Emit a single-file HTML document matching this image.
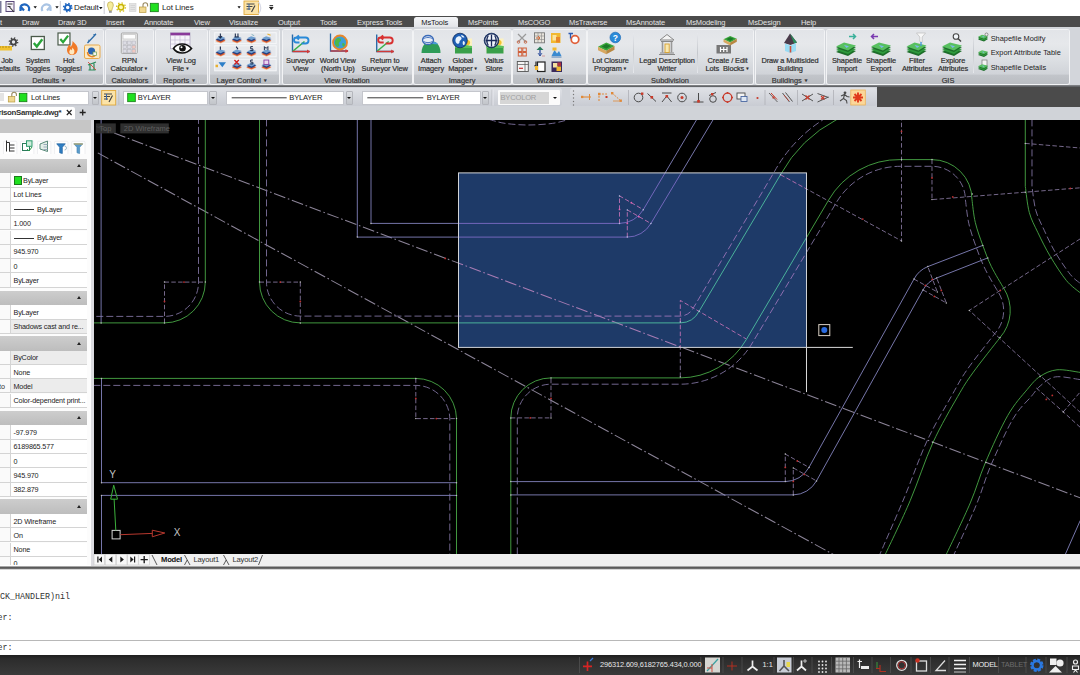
<!DOCTYPE html>
<html><head><meta charset="utf-8"><title>CAD</title>
<style>
*{box-sizing:border-box;margin:0;padding:0}
html,body{width:1080px;height:675px;overflow:hidden;background:#fff}
body{position:relative;font-family:"Liberation Sans",sans-serif;font-size:8px;color:#222}
.a{position:absolute}
.t{position:absolute;white-space:nowrap;line-height:1}
#qat{left:0;top:0;width:1080px;height:16px;background:#fff}
#tabs{left:0;top:15.5px;width:1080px;height:12px;background:#4b4b4b}
#tabs .t{color:#e4e4e4;font-size:7.5px;top:3.7px;letter-spacing:-0.1px}
#rib{left:0;top:27px;width:1080px;height:59px;background:#d3d6db}
.pan{position:absolute;top:2.5px;height:54.5px;background:linear-gradient(#e2e4e8 0%,#e6e8eb 25%,#dcdfe3 55%,#d0d3d8 82%,#c2c5ca 83%,#babdc2 100%);border-radius:2px;box-shadow:0 0 0 1px #f2f3f5}
.pt{position:absolute;white-space:nowrap;line-height:1;font-size:7.4px;color:#2c2c2c;top:49.8px;text-align:center;-webkit-text-stroke:0.2px #444}
.lb{position:absolute;white-space:nowrap;line-height:8.6px;font-size:7.4px;color:#262626;text-align:center;top:29.6px;letter-spacing:-0.1px;-webkit-text-stroke:0.2px #3a3a3a}
#tb2{left:0;top:87px;width:1080px;height:19.5px;background:#d0d3d9}
#tb3{left:0;top:106.5px;width:1080px;height:13px;background:#d0d3d8}
</style></head><body>
<div class="a" id="qat"></div><svg class="a" style="left:0;top:0" width="300" height="16" viewBox="0 0 300 16"><rect x="0" y="1" width="1.5" height="12" fill="#7a7a9a"/><rect x="6" y="1.5" width="8" height="10" fill="#f4f0f8" stroke="#5a4a7a" stroke-width="1"/><path d="M7.5,4 h5 M7.5,6.5 h3 M9.5,7 l4.5,5" stroke="#333" stroke-width="1.1" fill="none"/><path d="M20.5,6.5 L24,10.5 M20.5,6.5 L20.5,11 M20.5,6.5 a4.6,4.2 0 1 1 8,4.5" fill="none" stroke="#1f66c0" stroke-width="2.2"/><path d="M33.5,6.2 h3.4 l-1.7,2.2z M55.3,6.2 h3.4 l-1.7,2.2z M99,7 h3.6 l-1.8,2.3z M237.5,6.2 h3.2 l-1.6,2.2z" fill="#111"/><path d="M50.5,6.5 L47,10.5 M50.5,6.5 L50.5,11 M50.5,6.5 a4.6,4.2 0 1 0 -8,4.5" fill="none" stroke="#a9c4e4" stroke-width="2.2"/><path d="M60.3,1 V14 M104.2,1 V14" stroke="#c8c8d0" stroke-width="1"/><circle cx="67.700" cy="7.600" r="2.700" fill="none" stroke="#1f66c0" stroke-width="1.900"/><circle cx="67.700" cy="7.600" r="4.100" fill="none" stroke="#1f66c0" stroke-width="1.500" stroke-dasharray="1.500 1.720"/><path d="M107.5,5 a2.9,3.2 0 0 1 5.8,0 c0,2.2 -1.3,3 -1.4,5.5 h-3 c-0.1,-2.5 -1.4,-3.3 -1.4,-5.500z" fill="#f6ec9a" stroke="#b9a84a" stroke-width="0.7"/><rect x="109" y="11" width="2.8" height="1.8" fill="#999"/><circle cx="121" cy="7.3" r="2.7" fill="#fff7b0" stroke="#c8b400" stroke-width="1.5"/><circle cx="121" cy="7.3" r="4.4" fill="none" stroke="#d6c320" stroke-width="1.4" stroke-dasharray="1.4 2.05"/><rect x="129.5" y="3.5" width="6.5" height="8" fill="#e4e4e4" stroke="#d0d0d0" stroke-width="0.6"/><path d="M130.5,5.500 h4.500 M130.5,7.500 h4.500 M130.5,9.500 h4.500" stroke="#cfcfcf" stroke-width="0.8"/><rect x="139.5" y="7" width="6.5" height="5.5" fill="#f0d890" stroke="#b89a40" stroke-width="0.7"/><path d="M143,7 V5 a2.300,2.300 0 0 1 4.600,0 V6.500" fill="none" stroke="#9a8a60" stroke-width="1.1"/><rect x="150.3" y="3.3" width="8" height="8.4" fill="#1fe01f" stroke="#157a15" stroke-width="0.8"/><rect x="244" y="1" width="14.5" height="13.5" fill="#fbe3a8" stroke="#e0a83a" stroke-width="0.9"/><path d="M246.5,4 h8 M246.5,6.500 h6 M246.5,9 h4 M255,5.500 l-3.500,6.500" stroke="#444" stroke-width="1.2" fill="none"/><path d="M249,4 v6" stroke="#3a6ab0" stroke-width="1"/><path d="M258.5,2 a9,9 0 0 1 0,12" fill="none" stroke="#d8dae6" stroke-width="1.2"/><path d="M269.5,5.500 h3.600 M269.500,7.300 h3.600 l-1.800,2.300z" stroke="#111" stroke-width="0.8" fill="#111"/></svg><span class="t" style="left:74px;top:3.6px;font-size:8px;color:#222;letter-spacing:-0.1px">Default</span><span class="t" style="left:162px;top:3.6px;font-size:8px;color:#222;letter-spacing:-0.1px">Lot Lines</span><div class="a" id="tabs"><span class="t" style="left:0px">t</span><span class="t" style="left:22px">Draw</span><span class="t" style="left:58px">Draw 3D</span><span class="t" style="left:106px">Insert</span><span class="t" style="left:144px">Annotate</span><span class="t" style="left:194px">View</span><span class="t" style="left:229px">Visualize</span><span class="t" style="left:278px">Output</span><span class="t" style="left:320px">Tools</span><span class="t" style="left:357px">Express Tools</span><span class="t" style="left:468px">MsPoints</span><span class="t" style="left:518px">MsCOGO</span><span class="t" style="left:569px">MsTraverse</span><span class="t" style="left:626px">MsAnnotate</span><span class="t" style="left:686px">MsModeling</span><span class="t" style="left:748px">MsDesign</span><span class="t" style="left:801px">Help</span><div class="a" style="left:414px;top:1px;width:43.5px;height:10.5px;background:linear-gradient(#f4f5f7,#e3e5e9);border-radius:2.5px 2.5px 0 0"></div><span class="t" style="left:421.3px;color:#1a1a1a">MsTools</span></div><div class="a" id="rib"><div class="pan" style="left:-3px;width:106px"></div><span class="pt" style="left:9px;width:80px">Defaults<span style="font-size:4.6px;position:relative;top:-1px;margin-left:2px">&#9660;</span></span><div class="pan" style="left:105.6px;width:47.400000000000006px"></div><span class="pt" style="left:90px;width:80px">Calculators</span><div class="pan" style="left:156px;width:51px"></div><span class="pt" style="left:139.5px;width:80px">Reports<span style="font-size:4.6px;position:relative;top:-1px;margin-left:2px">&#9660;</span></span><div class="pan" style="left:210px;width:69.30000000000001px"></div><span class="pt" style="left:202px;width:80px">Layer Control<span style="font-size:4.6px;position:relative;top:-1px;margin-left:2px">&#9660;</span></span><div class="pan" style="left:282.6px;width:129.0px"></div><span class="pt" style="left:307px;width:80px">View Rotation</span><div class="pan" style="left:414.3px;width:96.39999999999998px"></div><span class="pt" style="left:422px;width:80px">Imagery</span><div class="pan" style="left:513.4px;width:72.30000000000007px"></div><span class="pt" style="left:510px;width:80px">Wizards</span><div class="pan" style="left:588.3px;width:165.0px"></div><span class="pt" style="left:630px;width:80px">Subdivision</span><div class="pan" style="left:756px;width:68px"></div><span class="pt" style="left:750px;width:80px">Buildings<span style="font-size:4.6px;position:relative;top:-1px;margin-left:2px">&#9660;</span></span><div class="pan" style="left:826.8px;width:242.5px"></div><span class="pt" style="left:908px;width:80px">GIS</span><span class="lb" style="left:-33px;width:80px">Job<br>Defaults</span><span class="lb" style="left:-2.200000000000003px;width:80px">System<br>Toggles</span><span class="lb" style="left:28.5px;width:80px">Hot<br>Toggles!</span><span class="lb" style="left:89.30000000000001px;width:80px">RPN<br>Calculator<span style="font-size:4.4px;position:relative;top:-1px;margin-left:1px">&#9660;</span></span><span class="lb" style="left:141px;width:80px">View Log<br>File<span style="font-size:4.4px;position:relative;top:-1px;margin-left:1px">&#9660;</span></span><span class="lb" style="left:260.5px;width:80px">Surveyor<br>View</span><span class="lb" style="left:297.8px;width:80px">World View<br>(North Up)</span><span class="lb" style="left:344.7px;width:80px">Return to<br>Surveyor View</span><span class="lb" style="left:391px;width:80px">Attach<br>Imagery</span><span class="lb" style="left:423px;width:80px">Global<br>Mapper<span style="font-size:4.4px;position:relative;top:-1px;margin-left:1px">&#9660;</span></span><span class="lb" style="left:454px;width:80px">Valtus<br>Store</span><span class="lb" style="left:570.5px;width:80px">Lot Closure<br>Program<span style="font-size:4.4px;position:relative;top:-1px;margin-left:1px">&#9660;</span></span><span class="lb" style="left:627px;width:80px">Legal Description<br>Writer</span><span class="lb" style="left:687.5px;width:80px">Create / Edit<br>Lots &nbsp;Blocks<span style="font-size:4.4px;position:relative;top:-1px;margin-left:1px">&#9660;</span></span><span class="lb" style="left:750px;width:80px">Draw a Multisided<br>Building</span><span class="lb" style="left:807px;width:80px">Shapefile<br>Import</span><span class="lb" style="left:841px;width:80px">Shapefile<br>Export</span><span class="lb" style="left:877px;width:80px">Filter<br>Attributes</span><span class="lb" style="left:913px;width:80px">Explore<br>Attributes</span><span class="t" style="left:990.7px;top:7.6px;font-size:7.4px;color:#222">Shapefile Modify</span><span class="t" style="left:990.7px;top:22.2px;font-size:7.4px;color:#222">Export Attribute Table</span><span class="t" style="left:990.7px;top:36.6px;font-size:7.4px;color:#222">Shapefile Details</span><div class="a" style="left:696.5px;top:6px;width:1px;height:40px;background:linear-gradient(#e6e8ec,#c4c7cc,#e6e8ec)"></div><div class="a" style="left:632.5px;top:6px;width:1px;height:40px;background:linear-gradient(#e6e8ec,#c9ccd1,#e6e8ec)"></div><div class="a" style="left:972.5px;top:6px;width:1px;height:40px;background:linear-gradient(#e6e8ec,#c4c7cc,#e6e8ec)"></div><svg class="a" style="left:0;top:0" width="1080" height="59" viewBox="0 27 1080 59"><rect x="-2" y="46" width="14" height="4.5" fill="#f2c230"/><path d="M0,46 v2 M3,46 v2 M6,46 v2 M9,46 v2" stroke="#9a7a10" stroke-width="0.7"/><circle cx="13.500" cy="42" r="2.600" fill="none" stroke="#444" stroke-width="1.8"/><circle cx="13.500" cy="42" r="4.100" fill="none" stroke="#444" stroke-width="1.500" stroke-dasharray="1.3 1.92"/><g transform="translate(31.3,36.5) scale(1)"><rect x="0" y="0" width="13" height="13" fill="#fff" stroke="#4a5a4a" stroke-width="1.3"/><path d="M2.5,6.5 L5.5,10 L11,2.8" fill="none" stroke="#2aa63a" stroke-width="2.4"/></g><g transform="translate(58,33) scale(0.92)"><rect x="0" y="0" width="13" height="13" fill="#fff" stroke="#4a5a4a" stroke-width="1.3"/><path d="M2.5,6.5 L5.5,10 L11,2.8" fill="none" stroke="#2aa63a" stroke-width="2.4"/></g><path d="M72.500,41 c2.500,2.500 6,5 5,9.500 c-0.600,3 -3,4.500 -5.500,4.500 c-2.800,0 -5,-2 -5,-5 c0,-2.500 1.500,-3.500 2,-5.500 c1,1 1.500,1.500 1.700,2.500 c1.200,-1.500 2,-3.500 1.800,-6z" fill="#f07a28"/><path d="M72.300,47.500 c1.500,1.500 2.500,3 2,5 c-0.400,1.500 -1.500,2 -2.500,2 c-1.500,0 -2.500,-1 -2.500,-2.500 c0,-1.500 1,-2 1.300,-3 c0.700,0.500 0.900,1 1,1.500 c0.500,-1 0.800,-2 0.700,-3z" fill="#fde8c0"/><path d="M87.500,43 L96,34" stroke="#2a6aa8" stroke-width="1.2"/><path d="M88,42.500 l1,-3 M96,34 l-3,1" stroke="#2a6aa8" stroke-width="0.8"/><rect x="84.500" y="45" width="15.500" height="13.500" rx="1.500" fill="#fbe9c4" stroke="#e9a94a" stroke-width="1"/><circle cx="91.500" cy="51" r="3.600" fill="#2a64b4"/><path d="M87.500,52 a4.500,4.500 0 0 0 8,3" stroke="#e8862a" stroke-width="1.4" fill="none"/><rect x="93" y="52" width="3.500" height="3.500" fill="#f4f4f4" stroke="#6a9a4a" stroke-width="0.7"/><path d="M88,65 L96,62 M88.500,70 h7 M90,63.500 v6 M94,63.500 v6" stroke="#2a8a5a" stroke-width="1.200" fill="none"/><path d="M88,62 l8,8" stroke="#d04a3a" stroke-width="0.9"/><rect x="121.300" y="33" width="16" height="20.500" rx="1" fill="#ececec" stroke="#a8a8a8" stroke-width="1"/><rect x="123" y="34.500" width="12.600" height="4.500" fill="#fdfdfd" stroke="#bbb" stroke-width="0.600"/><g stroke="#b4b4bc" stroke-width="0.600"><rect x="123" y="41" width="3.600" height="3.300" fill="#dcdce4"/><rect x="127.500" y="41" width="3.600" height="3.300" fill="#dcdce4"/><rect x="132" y="41" width="3.600" height="3.300" fill="#dcdce4"/><rect x="123" y="45.300" width="3.600" height="3.300" fill="#dcdce4"/><rect x="127.500" y="45.300" width="3.600" height="3.300" fill="#dcdce4"/><rect x="132" y="45.300" width="3.600" height="3.300" fill="#f0c8c0"/><rect x="123" y="49.500" width="3.600" height="3.300" fill="#dcdce4"/><rect x="127.500" y="49.500" width="3.600" height="3.300" fill="#dcdce4"/><rect x="132" y="49.500" width="3.600" height="3.300" fill="#f0c8c0"/></g><rect x="170.500" y="32.800" width="19.500" height="16" fill="#f6f4fa" stroke="#b0a8c0" stroke-width="0.800"/><rect x="170.500" y="32.800" width="19.500" height="2.600" fill="#8a3a9a"/><path d="M175,36 v12 M180,36 v12 M185,36 v12 M171,40 h19 M171,44 h19" stroke="#c4bcd4" stroke-width="0.700"/><path d="M173.500,48.500 c4,-6 13,-6 18,0 c-5,6 -14,6 -18,0z" fill="#fff" stroke="#111" stroke-width="1.700"/><circle cx="182.500" cy="48.300" r="3.300" fill="#111"/><circle cx="181.500" cy="47.200" r="1" fill="#fff"/><rect x="214.700" y="32.7" width="61.500" height="10.9" fill="#e6e8ec" stroke="#f6f7f9" stroke-width="1"/><g transform="translate(215.5,34.400000000000006) scale(0.88)"><path d="M0,8 L5.500,5.800 L11.500,7.800 L6,10.400 Z" fill="#f4c49c"/><path d="M0,7.200 L5.500,5 L11.500,7 L6,9.600 Z" fill="#d8552a"/><path d="M0,5.800 L5.500,3.400 L11.500,5.200 L6,8.200 Z" fill="#27407f"/><path d="M0.800,4.500 L5.500,2.200 L11,3.800 L6,6.400 Z" fill="#6f9fd0"/><path d="M5.5,-1 V3.5 M3.5,2 L5.5,4 L7.5,2" stroke="#1a2a4a" stroke-width="1.2" fill="none"/></g><g transform="translate(231.8,34.400000000000006) scale(0.88)"><path d="M0,8 L5.500,5.800 L11.500,7.800 L6,10.400 Z" fill="#f4c49c"/><path d="M0,7.200 L5.500,5 L11.500,7 L6,9.600 Z" fill="#d8552a"/><path d="M0,5.800 L5.500,3.400 L11.500,5.200 L6,8.200 Z" fill="#27407f"/><path d="M0.800,4.500 L5.500,2.200 L11,3.800 L6,6.400 Z" fill="#6f9fd0"/><path d="M4,-1 V3 M7,-1 V3 M3,3 H8" stroke="#1a2a4a" stroke-width="1.2" fill="none"/></g><g transform="translate(246.3,34.400000000000006) scale(0.88)"><path d="M0,8 L5.500,5.800 L11.500,7.800 L6,10.400 Z" fill="#f4c49c"/><path d="M0,7.200 L5.500,5 L11.500,7 L6,9.600 Z" fill="#d8552a"/><path d="M0,5.800 L5.500,3.400 L11.500,5.200 L6,8.200 Z" fill="#27407f"/><path d="M0.800,4.500 L5.500,2.200 L11,3.800 L6,6.400 Z" fill="#6f9fd0"/><path d="M6,0 L9,1.5" stroke="#7ab" stroke-width="1"/></g><g transform="translate(261.3,34.400000000000006) scale(0.88)"><path d="M0,8 L5.500,5.800 L11.500,7.800 L6,10.400 Z" fill="#f4c49c"/><path d="M0,7.200 L5.500,5 L11.500,7 L6,9.600 Z" fill="#d8552a"/><path d="M0,5.800 L5.500,3.400 L11.500,5.200 L6,8.200 Z" fill="#27407f"/><path d="M0.800,4.500 L5.500,2.200 L11,3.800 L6,6.400 Z" fill="#6f9fd0"/><path d="M7,-0.5 L10.5,1" stroke="#e8b030" stroke-width="1.4"/></g><rect x="214.700" y="45.8" width="61.500" height="11.0" fill="#e6e8ec" stroke="#f6f7f9" stroke-width="1"/><g transform="translate(215.5,47.5) scale(0.88)"><path d="M0,8 L5.500,5.800 L11.500,7.800 L6,10.400 Z" fill="#f4c49c"/><path d="M0,7.200 L5.500,5 L11.500,7 L6,9.600 Z" fill="#d8552a"/><path d="M0,5.800 L5.500,3.400 L11.500,5.200 L6,8.200 Z" fill="#27407f"/><path d="M0.800,4.500 L5.500,2.200 L11,3.800 L6,6.400 Z" fill="#6f9fd0"/><path d="M5.5,-1 V2.5" stroke="#1a2a4a" stroke-width="1.3"/></g><g transform="translate(231.8,47.5) scale(0.88)"><path d="M0,8 L5.500,5.800 L11.500,7.800 L6,10.400 Z" fill="#f4c49c"/><path d="M0,7.200 L5.500,5 L11.500,7 L6,9.600 Z" fill="#d8552a"/><path d="M0,5.800 L5.500,3.400 L11.500,5.200 L6,8.200 Z" fill="#27407f"/><path d="M0.800,4.500 L5.500,2.200 L11,3.800 L6,6.400 Z" fill="#6f9fd0"/><path d="M5,-1 L7,2" stroke="#1a2a4a" stroke-width="1.3"/></g><g transform="translate(246.3,47.5) scale(0.88)"><path d="M0,8 L5.500,5.800 L11.500,7.800 L6,10.400 Z" fill="#f4c49c"/><path d="M0,7.200 L5.500,5 L11.500,7 L6,9.600 Z" fill="#d8552a"/><path d="M0,5.800 L5.500,3.400 L11.500,5.200 L6,8.200 Z" fill="#27407f"/><path d="M0.800,4.500 L5.500,2.200 L11,3.800 L6,6.400 Z" fill="#6f9fd0"/><path d="M7.5,-1 H5 V1.5 H7.5 V3.5 H4.5" stroke="#1a2a4a" stroke-width="1.1" fill="none"/></g><g transform="translate(261.3,47.5) scale(0.88)"><path d="M0,8 L5.500,5.800 L11.500,7.800 L6,10.400 Z" fill="#f4c49c"/><path d="M0,7.200 L5.500,5 L11.500,7 L6,9.600 Z" fill="#d8552a"/><path d="M0,5.800 L5.500,3.400 L11.500,5.200 L6,8.200 Z" fill="#27407f"/><path d="M0.800,4.500 L5.500,2.200 L11,3.800 L6,6.400 Z" fill="#6f9fd0"/><path d="M3.5,-1 V3 M7.5,-1 V3 M3.5,-1 L5.5,1 L7.5,-1" stroke="#1a2a4a" stroke-width="1.1" fill="none"/></g><rect x="214.700" y="59.2" width="61.500" height="11.6" fill="#e6e8ec" stroke="#f6f7f9" stroke-width="1"/><path d="M215.5,64.7 h2.500 v2.500 h-2.500z" fill="#e8b030"/><path d="M218.5,62.2 h7.500 l-3.700,5z" fill="#2d7fc8"/><g transform="translate(231.8,60.900000000000006) scale(0.88)"><path d="M0,8 L5.500,5.800 L11.500,7.800 L6,10.400 Z" fill="#f4c49c"/><path d="M0,7.200 L5.500,5 L11.500,7 L6,9.600 Z" fill="#d8552a"/><path d="M0,5.800 L5.500,3.400 L11.500,5.200 L6,8.200 Z" fill="#27407f"/><path d="M0.800,4.500 L5.500,2.200 L11,3.800 L6,6.400 Z" fill="#6f9fd0"/><path d="M3,-1 L8,4 M8,-1 L3,4" stroke="#d02020" stroke-width="1.5"/></g><g transform="translate(246.3,60.900000000000006) scale(0.88)"><path d="M0,8 L5.500,5.800 L11.500,7.800 L6,10.400 Z" fill="#f4c49c"/><path d="M0,7.200 L5.500,5 L11.500,7 L6,9.600 Z" fill="#d8552a"/><path d="M0,5.800 L5.500,3.400 L11.500,5.200 L6,8.200 Z" fill="#27407f"/><path d="M0.800,4.500 L5.500,2.200 L11,3.800 L6,6.400 Z" fill="#6f9fd0"/><path d="M7.5,-1 H5 V1.5 H7.5 V3.5 H4.5" stroke="#1a2a4a" stroke-width="1.1" fill="none"/></g><g transform="translate(261.3,60.900000000000006) scale(0.88)"><path d="M0,8 L5.500,5.800 L11.500,7.800 L6,10.400 Z" fill="#f4c49c"/><path d="M0,7.200 L5.500,5 L11.500,7 L6,9.600 Z" fill="#d8552a"/><path d="M0,5.800 L5.500,3.400 L11.500,5.200 L6,8.200 Z" fill="#27407f"/><path d="M0.800,4.500 L5.500,2.200 L11,3.800 L6,6.400 Z" fill="#6f9fd0"/><rect x="3" y="-1" width="5.5" height="5" fill="#e8d8f0" stroke="#8a3aa0" stroke-width="1"/></g><g transform="translate(290.5,34.5) scale(1.0)"><path d="M2,0 V17 H19" fill="none" stroke="#2a6aa8" stroke-width="1.4"/><path d="M2,17 L14,7" stroke="#3ab04a" stroke-width="1.6"/><path d="M2,17 H19" stroke="#d03a3a" stroke-width="1.4"/><path d="M16.5,15 L19.5,17 L16.5,19 Z" fill="#d03a3a"/><path d="M6,3 H15 a3,3 0 0 1 0,6 H11 M6,3 L8.5,1 M6,3 L8.5,5 M6,3 a2,2 0 0 0 0,5 L9,8" fill="none" stroke="#2a8ad8" stroke-width="1.9"/></g><path d="M330.500,33.500 V51 H348" fill="none" stroke="#2a6aa8" stroke-width="1.300"/><path d="M330.500,51 H348" stroke="#d03a3a" stroke-width="1.300"/><path d="M345.500,49 l3,2 l-3,2z" fill="#d03a3a"/><circle cx="340" cy="42.500" r="7" fill="#3aa0d8" stroke="#e8862a" stroke-width="1.800"/><path d="M336,39 c2,-2 5,-1 5,1 c0,2 -3,2 -2,4 c1,2 -1,4 -3,2 c-1.500,-1.500 -1.500,-5 0,-7z M342.500,43 c2,0 3,1 2,3 c-1,1.500 -3,0 -2,-3z" fill="#4ab84a"/><g transform="translate(374.7,34.5) scale(1.0)"><path d="M2,0 V17 H19" fill="none" stroke="#2a6aa8" stroke-width="1.4"/><path d="M2,17 L14,7" stroke="#3ab04a" stroke-width="1.6"/><path d="M2,17 H19" stroke="#d03a3a" stroke-width="1.4"/><path d="M16.5,15 L19.5,17 L16.5,19 Z" fill="#d03a3a"/><path d="M6,3 H15 a3,3 0 0 1 0,6 H11 M6,3 L8.5,1 M6,3 L8.5,5 M6,3 a2,2 0 0 0 0,5 L9,8" fill="none" stroke="#d83030" stroke-width="1.9"/></g><path d="M421.500,53 c0,-8 5,-12 9.500,-12 c5,0 9.500,4 9.500,12z" fill="#2f9c58"/><path d="M430,42.500 c3,-1.500 6,-0.500 8,1.500 c-2,0.500 -5,0.500 -8,-1.500z" fill="#4a9ad8"/><ellipse cx="428" cy="40" rx="5.500" ry="4.500" fill="#e8eef8" stroke="#3a6ab8" stroke-width="1.300"/><path d="M423,39 c3,-2 7,-2 10,0 M423.500,41.500 c3,1.500 6,1.500 9,0" stroke="#3a6ab8" stroke-width="0.900" fill="none"/><rect x="455.0" y="38.500" width="17" height="14.500" fill="#fdf2c0"/><path d="M455.0,46 h17 v7.500 h-17z" fill="#3aa04a"/><circle cx="467.5" cy="42.500" r="2.600" fill="#f2c230"/><path d="M455.0,46 c4,-1.500 12,-1.500 17,0 v2 h-17z" fill="#5ac05a"/><circle cx="460.0" cy="40.500" r="7.300" fill="#1f5fb4" stroke="#0e2a5a" stroke-width="0.800"/><rect x="486.5" y="38.500" width="17" height="14.500" fill="#fdf2c0"/><path d="M486.5,46 h17 v7.500 h-17z" fill="#3aa04a"/><circle cx="499" cy="42.500" r="2.600" fill="#f2c230"/><path d="M486.5,46 c4,-1.500 12,-1.500 17,0 v2 h-17z" fill="#5ac05a"/><circle cx="491.5" cy="40.500" r="7.300" fill="#1a2a5a" stroke="#0e2a5a" stroke-width="0.800"/><path d="M456,38 c2,-2.500 5,-2 5.500,0 c0.500,2 -2,2 -2,4 c0,2 -2.500,2.500 -3.500,0.500 c-0.800,-1.500 -0.800,-3 0,-4.500z M463,41 c1.500,0 2.500,1.500 1.500,3.500 c-1,1.500 -2.500,0 -1.500,-3.500z M461,35 c1.500,0 3,1 3.500,2.500 c-1.500,0.300 -3,-0.500 -3.500,-2.500z" fill="#e8f4ff"/><circle cx="491.500" cy="40.500" r="6.300" fill="#f0f4fa"/><path d="M491.500,34.500 v12 M485.500,40.500 h12 M488.300,35.500 c-2,3.300 -2,6.700 0,10 M494.700,35.500 c2,3.300 2,6.700 0,10" stroke="#1a2a5a" stroke-width="1.300" fill="none"/><path d="M518,34 l8,8 M526,34 l-8,8" stroke="#999" stroke-width="1.200"/><circle cx="518.500" cy="42" r="1.300" fill="none" stroke="#c86a4a" stroke-width="0.900"/><circle cx="525.500" cy="42" r="1.300" fill="none" stroke="#c86a4a" stroke-width="0.900"/><rect x="534.500" y="32.800" width="10" height="10" fill="#e8e4dc" stroke="#777" stroke-width="0.900"/><path d="M538,32.800 v10 M541.500,32.800 v10 M534.500,36 h10 M534.500,39.500 h10" stroke="#888" stroke-width="0.600"/><path d="M536,38 h4 l-2,-2 M540,38 l-2,2" stroke="#d06a3a" stroke-width="1" fill="none"/><rect x="551" y="33" width="9.500" height="10" fill="#f2b830"/><rect x="552.500" y="35" width="4" height="5.500" fill="#fbe4a0"/><rect x="556" y="37" width="4" height="5.500" fill="#e8862a"/><circle cx="575" cy="39.500" r="3.800" fill="#fff" stroke="#e0603a" stroke-width="1.800"/><path d="M568.500,33.500 h4.500 M570.500,33.500 v5" stroke="#2a5ab0" stroke-width="1.300" fill="none"/><g fill="none" stroke="#d0603a" stroke-width="1"><rect x="518.300" y="48" width="3.500" height="3.500"/><rect x="522.800" y="48" width="3.500" height="3.500"/><rect x="518.300" y="52.500" width="3.500" height="3.500"/><rect x="522.800" y="52.500" width="3.500" height="3.500"/></g><path d="M536.500,50 l3.500,-3.500 l3.500,3.500z" fill="#2a7a5a"/><path d="M540,50 v6" stroke="#2a4a9a" stroke-width="1.300"/><path d="M538,53 l2,3 l2,-3" stroke="#2a4a9a" stroke-width="0.800" fill="none"/><path d="M542,56 h3" stroke="#c88" stroke-width="0.800"/><path d="M551.500,56 l3,-6 l2.500,3.500 l2,-2.500 l2.500,5z" fill="#3a8ad0"/><rect x="552.500" y="47.500" width="4" height="3" fill="#f2b830"/><path d="M551.500,57 h10" stroke="#2a6ab0" stroke-width="0.800"/><rect x="517.300" y="61.500" width="11" height="10" fill="#f4f4f4" stroke="#555" stroke-width="0.900"/><path d="M517.300,64.500 h11 M525,61.500 v10" stroke="#555" stroke-width="0.700"/><path d="M519,68.300 h4" stroke="#d03030" stroke-width="1.200"/><rect x="537.500" y="62" width="7.500" height="9.500" fill="#fff" stroke="#222" stroke-width="1.200"/><path d="M536,61.500 v5 l-1.500,-1" stroke="#222" stroke-width="1.200" fill="none"/><rect x="535" y="66" width="3" height="4" fill="#f2b830"/><rect x="551.500" y="61.500" width="10.500" height="10.500" fill="#3a2a5a"/><rect x="553" y="63" width="4.500" height="4.500" fill="#f4e0a0"/><rect x="556.500" y="66.500" width="4.500" height="4.500" fill="#f2b830"/><rect x="557.500" y="62.500" width="3.500" height="3.500" fill="#b03040"/><g transform="translate(598,40.8) scale(1.18)"><path d="M0,5 L7,1.500 L14,4.500 L7,8.500 Z" fill="#3aa83a"/><path d="M3,4.800 L7,2.800 L11,4.500 L7,6.800 Z" fill="#1d7a2a"/><path d="M0,5 L7,8.500 V11.500 L0,8 Z" fill="#d8a860"/><path d="M14,4.500 L7,8.500 V11.500 L14,7.500 Z" fill="#b88840"/></g><circle cx="615.300" cy="37.500" r="5.300" fill="#2a8ad8" stroke="#1a6ab8" stroke-width="0.700"/><text x="612.700" y="40.700" font-size="8.500" font-weight="bold" fill="#fff" font-family="Liberation Sans, sans-serif">?</text><path d="M660,40 L667,34.500 L674,40 Z" fill="#f4f4f4" stroke="#888" stroke-width="1"/><path d="M661,41.500 h12 M660,53 h14 M659,54.500 h16" stroke="#888" stroke-width="1.100"/><path d="M662.500,42 v10.500 M671.500,42 v10.500" stroke="#999" stroke-width="1.600"/><rect x="665" y="44" width="4.200" height="8.500" fill="#f8e8b0" stroke="#d8a030" stroke-width="0.900"/><rect x="716.500" y="45" width="14.500" height="8.500" fill="#777"/><path d="M720.500,47 v5 M723.700,47 v5 M727,47 v5 M720.500,49.500 h6.500" stroke="#fff" stroke-width="1.200"/><g transform="translate(723.5,34.5) scale(0.95)"><path d="M0,5 L7,1.500 L14,4.500 L7,8.500 Z" fill="#3aa83a"/><path d="M3,4.800 L7,2.800 L11,4.500 L7,6.800 Z" fill="#1d7a2a"/><path d="M0,5 L7,8.500 V11.500 L0,8 Z" fill="#d8a860"/><path d="M14,4.500 L7,8.500 V11.500 L14,7.500 Z" fill="#b88840"/></g><path d="M784,43 L790,33.500 L797,42.500 L790.500,45 Z" fill="#4a3a4a"/><path d="M790,33.500 L797,42.500 L794,43.500 Z" fill="#2a8a5a"/><path d="M785,43.500 L790.500,45.500 L796,43 V51 L790.500,53 L785,51 Z" fill="#9adcf4"/><path d="M790.500,46 v6.500" stroke="#d0503a" stroke-width="1.600"/><g transform="translate(836,43) scale(1.0)"><path d="M0,9 L8,5 L20,8 L12,13 Z" fill="#1d6e2a"/><path d="M0,7 L8,3 L20,6 L12,11 Z" fill="#2e9a3c"/><path d="M0,5 L8,1 L20,4 L12,9 Z" fill="#1d6e2a"/><path d="M0,3.5 L8,-0.5 L20,2.5 L12,7.5 Z" fill="#58c060"/><path d="M8,2 L13,3.2 L10.5,5 Z" fill="#7ab8e8"/></g><path d="M849,36.500 h6 M853,34 l2.500,2.500 l-2.500,2.500" stroke="#3ab09a" stroke-width="1.500" fill="none"/><g transform="translate(871,43) scale(1.0)"><path d="M0,9 L8,5 L20,8 L12,13 Z" fill="#1d6e2a"/><path d="M0,7 L8,3 L20,6 L12,11 Z" fill="#2e9a3c"/><path d="M0,5 L8,1 L20,4 L12,9 Z" fill="#1d6e2a"/><path d="M0,3.5 L8,-0.5 L20,2.5 L12,7.5 Z" fill="#58c060"/><path d="M8,2 L13,3.2 L10.5,5 Z" fill="#7ab8e8"/></g><path d="M878,36.500 h-6 M874,34 l-2.500,2.500 l2.500,2.500" stroke="#7a3ab0" stroke-width="1.500" fill="none"/><g transform="translate(906.5,43) scale(1.0)"><path d="M0,9 L8,5 L20,8 L12,13 Z" fill="#1d6e2a"/><path d="M0,7 L8,3 L20,6 L12,11 Z" fill="#2e9a3c"/><path d="M0,5 L8,1 L20,4 L12,9 Z" fill="#1d6e2a"/><path d="M0,3.5 L8,-0.5 L20,2.5 L12,7.5 Z" fill="#58c060"/><path d="M8,2 L13,3.2 L10.5,5 Z" fill="#7ab8e8"/></g><path d="M916.500,33 h9 l-3.300,4 v5.500 l-2.400,-1 v-4.500z" fill="#f8f8f8" stroke="#bbb" stroke-width="0.700"/><path d="M921,42 v4" stroke="#4a9ad8" stroke-width="1.400"/><g transform="translate(942,43) scale(1.0)"><path d="M0,9 L8,5 L20,8 L12,13 Z" fill="#1d6e2a"/><path d="M0,7 L8,3 L20,6 L12,11 Z" fill="#2e9a3c"/><path d="M0,5 L8,1 L20,4 L12,9 Z" fill="#1d6e2a"/><path d="M0,3.5 L8,-0.5 L20,2.5 L12,7.5 Z" fill="#58c060"/><path d="M8,2 L13,3.2 L10.5,5 Z" fill="#7ab8e8"/></g><circle cx="956" cy="36.500" r="2.800" fill="#f4f8fc" stroke="#444" stroke-width="1.100"/><path d="M958,38.500 l3,3" stroke="#444" stroke-width="1.400"/><g transform="translate(978,35) scale(0.5)"><path d="M0,9 L8,5 L20,8 L12,13 Z" fill="#1d6e2a"/><path d="M0,7 L8,3 L20,6 L12,11 Z" fill="#2e9a3c"/><path d="M0,5 L8,1 L20,4 L12,9 Z" fill="#1d6e2a"/><path d="M0,3.5 L8,-0.5 L20,2.5 L12,7.5 Z" fill="#58c060"/><path d="M8,2 L13,3.2 L10.5,5 Z" fill="#7ab8e8"/></g><circle cx="986.500" cy="34.500" r="1.500" fill="#eee" stroke="#555" stroke-width="0.600"/><g transform="translate(978,50.5) scale(0.5)"><path d="M0,9 L8,5 L20,8 L12,13 Z" fill="#1d6e2a"/><path d="M0,7 L8,3 L20,6 L12,11 Z" fill="#2e9a3c"/><path d="M0,5 L8,1 L20,4 L12,9 Z" fill="#1d6e2a"/><path d="M0,3.5 L8,-0.5 L20,2.5 L12,7.5 Z" fill="#58c060"/><path d="M8,2 L13,3.2 L10.5,5 Z" fill="#7ab8e8"/></g><rect x="982" y="60" width="5" height="6" fill="#f4f4f4" stroke="#777" stroke-width="0.700"/><g transform="translate(978,64.5) scale(0.5)"><path d="M0,9 L8,5 L20,8 L12,13 Z" fill="#1d6e2a"/><path d="M0,7 L8,3 L20,6 L12,11 Z" fill="#2e9a3c"/><path d="M0,5 L8,1 L20,4 L12,9 Z" fill="#1d6e2a"/><path d="M0,3.5 L8,-0.5 L20,2.5 L12,7.5 Z" fill="#58c060"/><path d="M8,2 L13,3.2 L10.5,5 Z" fill="#7ab8e8"/></g></svg></div><div class="a" style="left:0;top:85px;width:1080px;height:2px;background:linear-gradient(#8a8c90,#55575a)"></div>
<div class="a" id="tb2"></div><div class="a" style="left:877px;top:87px;width:203px;height:19.5px;background:#4b4b4b"></div><div class="a" id="tb3"></div><div class="a" style="left:-4px;top:87.5px;width:566px;height:18.5px;background:linear-gradient(#dfe1e6,#c9ccd3);border-radius:3px"></div><div class="a" style="left:570px;top:87.5px;width:307px;height:18.5px;background:linear-gradient(#dfe1e6,#c9ccd3);border-radius:3px"></div><div class="a" style="left:-2px;top:90.5px;width:91px;height:14.5px;background:#fff;border:0.6px solid #c4c6cc"></div><div class="a" style="left:91.7px;top:91px;width:7.299999999999997px;height:13.5px;background:linear-gradient(#dcdee2,#c2c5ca);border:0.6px solid #b4b6bc;border-radius:1px"></div><div class="a" style="left:93.25px;top:96.6px;width:0;height:0;border-left:2.1px solid transparent;border-right:2.1px solid transparent;border-top:2.6px solid #111"></div><div class="a" style="left:122.7px;top:90.5px;width:85.60000000000001px;height:14.5px;background:#fff;border:0.6px solid #c4c6cc"></div><div class="a" style="left:209.3px;top:91px;width:7.399999999999977px;height:13.5px;background:linear-gradient(#dcdee2,#c2c5ca);border:0.6px solid #b4b6bc;border-radius:1px"></div><div class="a" style="left:210.9px;top:96.6px;width:0;height:0;border-left:2.1px solid transparent;border-right:2.1px solid transparent;border-top:2.6px solid #111"></div><div class="a" style="left:226px;top:90.5px;width:118.30000000000001px;height:14.5px;background:#fff;border:0.6px solid #c4c6cc"></div><div class="a" style="left:345.7px;top:91px;width:7.0px;height:13.5px;background:linear-gradient(#dcdee2,#c2c5ca);border:0.6px solid #b4b6bc;border-radius:1px"></div><div class="a" style="left:347.09999999999997px;top:96.6px;width:0;height:0;border-left:2.1px solid transparent;border-right:2.1px solid transparent;border-top:2.6px solid #111"></div><div class="a" style="left:361.7px;top:90.5px;width:119.0px;height:14.5px;background:#fff;border:0.6px solid #c4c6cc"></div><div class="a" style="left:481.7px;top:91px;width:7.300000000000011px;height:13.5px;background:linear-gradient(#dcdee2,#c2c5ca);border:0.6px solid #b4b6bc;border-radius:1px"></div><div class="a" style="left:483.25px;top:96.6px;width:0;height:0;border-left:2.1px solid transparent;border-right:2.1px solid transparent;border-top:2.6px solid #111"></div><div class="a" style="left:498.3px;top:90.3px;width:61.49999999999994px;height:15px;background:#fbfbfb;border-radius:1px"></div><div class="a" style="left:499.6px;top:91.8px;width:49.80000000000003px;height:12px;background:#d6d6d6"></div><div class="a" style="left:553.4px;top:96.6px;width:0;height:0;border-left:2.1px solid transparent;border-right:2.1px solid transparent;border-top:2.6px solid #111"></div><span class="t" style="left:31px;font-size:7.6px;color:#222;top:94px;letter-spacing:-0.22px">Lot Lines</span><span class="t" style="left:137.7px;font-size:7.6px;color:#222;top:94px;letter-spacing:-0.22px">BYLAYER</span><span class="t" style="left:289.3px;font-size:7.6px;color:#222;top:94px;letter-spacing:-0.22px">BYLAYER</span><span class="t" style="left:426.7px;font-size:7.6px;color:#222;top:94px;letter-spacing:-0.22px">BYLAYER</span><span class="t" style="left:500.5px;font-size:7.6px;color:#222;top:94px;letter-spacing:-0.22px;color:#a0a0a0">BYCOLOR</span><svg class="a" style="left:0;top:87px" width="880" height="20" viewBox="0 87 880 20"><rect x="0" y="93" width="4" height="8" fill="#e4e4e4"/><rect x="8.300" y="96.500" width="6.500" height="5.500" fill="#f0d890" stroke="#b89a40" stroke-width="0.700"/><path d="M11.800,96.500 V94.500 a2.300,2.300 0 0 1 4.600,0 V96" fill="none" stroke="#9a8a60" stroke-width="1.100"/><rect x="19.300" y="93.300" width="7.600" height="8.400" fill="#1fe01f" stroke="#157a15" stroke-width="0.800"/><rect x="101.700" y="90.500" width="14" height="14.500" fill="#fbe3a8" stroke="#e0a83a" stroke-width="0.900"/><path d="M104,94 h8 M104,96.500 h6 M104,99 h4 M112.500,95.500 l-3.500,6.500" stroke="#444" stroke-width="1.200" fill="none"/><path d="M106.500,94 v6" stroke="#3a6ab0" stroke-width="1"/><path d="M118.800,90 V105 M492,89.500 V105.500" stroke="#b8bac0" stroke-width="0.800"/><path d="M493,89.500 V105.500" stroke="#eceef2" stroke-width="0.800"/><rect x="127.700" y="93.300" width="7.600" height="8.400" fill="#1fe01f" stroke="#157a15" stroke-width="0.800"/><path d="M231.700,97.800 H286.700 M367.300,97.800 H423.300" stroke="#222" stroke-width="0.900"/><g fill="#777"><circle cx="573.500" cy="91" r="0.700"/><circle cx="573.500" cy="94.500" r="0.700"/><circle cx="573.500" cy="98" r="0.700"/><circle cx="573.500" cy="101.500" r="0.700"/><circle cx="573.500" cy="105" r="0.700"/></g><path d="M582,97 h9" stroke="#e08a3a" stroke-width="1.100"/><rect x="581" y="95.800" width="2.300" height="2.300" fill="#e08a3a"/><path d="M589.500,94 v6" stroke="#e08a3a" stroke-width="1"/><path d="M599,101 v-7 h8" stroke="#e08a3a" stroke-width="1.100" fill="none" stroke-dasharray="2 1.300"/><rect x="598" y="92.800" width="2.400" height="2.400" fill="#e08a3a"/><rect x="605.500" y="96" width="2" height="2" fill="#c83a2a"/><path d="M612,93 l9,8" stroke="#e08a3a" stroke-width="1" stroke-dasharray="2 1.200"/><rect x="611" y="92" width="2.400" height="2.400" fill="#e08a3a"/><rect x="619.500" y="99.500" width="2.400" height="2.400" fill="#e08a3a"/><path d="M613,101 h7" stroke="#e08a3a" stroke-width="0.800"/><path d="M628.500,90 V105 M765,90 V105 M797.500,90 V105 M833.500,90 V105" stroke="#aeb0b6" stroke-width="0.800"/><circle cx="638.500" cy="97.500" r="4.300" fill="none" stroke="#4a4a4a" stroke-width="1"/><rect x="641" y="92.500" width="2.400" height="2.400" fill="#c83a2a"/><path d="M647.500,93.500 l8.500,8" stroke="#4a4a4a" stroke-width="1"/><rect x="650.500" y="96" width="2.600" height="2.600" fill="#c83a2a"/><path d="M662,93 h9.500 M662,102 l4.800,-6 l4.800,6" stroke="#4a4a4a" stroke-width="1" fill="none"/><rect x="665.500" y="95" width="2.600" height="2.600" fill="#c83a2a"/><circle cx="682" cy="97.500" r="4.300" fill="none" stroke="#4a4a4a" stroke-width="1"/><circle cx="682" cy="97.500" r="1.500" fill="#c83a2a"/><path d="M693.500,102 h10 M698.500,93 v9" stroke="#4a4a4a" stroke-width="1" fill="none"/><rect x="697.200" y="100" width="2.600" height="2.600" fill="#c83a2a"/><circle cx="713" cy="99" r="3.300" fill="none" stroke="#4a4a4a" stroke-width="1"/><path d="M709,95.500 l7,-3" stroke="#4a4a4a" stroke-width="1"/><rect x="711" y="93" width="2.400" height="2.400" fill="#c83a2a"/><circle cx="727.500" cy="97.500" r="4.300" fill="none" stroke="#c83a2a" stroke-width="1.300"/><path d="M727.500,92 v1.500 M727.500,101.500 v1.500 M722,97.500 h1.500 M731.500,97.500 h1.500" stroke="#c83a2a" stroke-width="1.600"/><rect x="737" y="93" width="8" height="6" fill="#f4f4f4" stroke="#4a4a4a" stroke-width="0.900"/><rect x="741" y="96.500" width="6" height="5" fill="#dfe8f4" stroke="#3a5a9a" stroke-width="0.800"/><circle cx="757.500" cy="98" r="1.100" fill="#c83a2a"/><path d="M769,93 l8.500,9" stroke="#666" stroke-width="1"/><path d="M771,93 l6,6.500" stroke="#c83a2a" stroke-width="1"/><rect x="772.500" y="96.500" width="2" height="2" fill="#c83a2a"/><path d="M782.500,93 l7,9 M785.500,92.500 l7,9" stroke="#555" stroke-width="1"/><path d="M784,95 l5,6" stroke="#c83a2a" stroke-width="0.700"/><path d="M802,94 l11,7 M802,101 l11,-7" stroke="#555" stroke-width="1"/><path d="M805.500,95.500 l4,4 M809.500,95.500 l-4,4" stroke="#c83a2a" stroke-width="1.300"/><path d="M817.500,93.500 l11,4 M817.500,102 l11,-5" stroke="#555" stroke-width="1"/><path d="M821,96 l3.500,3.500 M824.500,96 l-3.500,3.500" stroke="#c83a2a" stroke-width="1.100"/><circle cx="845" cy="92.800" r="1.400" fill="#4a4a4a"/><path d="M841,96 l3.500,-1.500 l2.500,2 l2.500,0.500 M844.500,94.500 l-1,4 l-3.500,2.500 M843.500,98.500 l3,2 l0.500,3" stroke="#4a4a4a" stroke-width="1.100" fill="none"/><rect x="850.800" y="90" width="14.500" height="15" fill="#fbd79a" stroke="#eeb258" stroke-width="0.800"/><path d="M858,92.500 v10 M853,97.500 h10 M854.500,94 l7,7 M861.500,94 l-7,7" stroke="#e0381a" stroke-width="1.900"/></svg><div class="a" style="left:-2px;top:106.800px;width:77px;height:12.700px;background:#fff;border-radius:0 2px 0 0"></div><span class="t" style="left:-1.500px;top:109px;font-size:7.900px;font-weight:bold;color:#333;letter-spacing:-0.350px">risonSample.dwg*</span><svg class="a" style="left:60px;top:106px" width="30" height="14" viewBox="60 106 30 14"><path d="M66.800,110 l4.800,5 M71.600,110 l-4.800,5" stroke="#222" stroke-width="1.100"/><path d="M82.700,109.500 v6 M79.700,112.500 h6" stroke="#222" stroke-width="1.300"/></svg>
<div class="a" style="left:0;top:119.5px;width:91px;height:13.5px;background:#c6c6c6"></div><div class="a" style="left:91px;top:119.5px;width:2.7px;height:447px;background:#dcdce0"></div><div class="a" style="left:0;top:133px;width:91px;height:432px;background:#fcfcfc;overflow:hidden" id="pp"><svg class="a" style="left:0;top:3px" width="88" height="18" viewBox="0 133 88 18"><g fill="#fff" stroke="#e4e4e8" stroke-width="0.6"><rect x="3.500" y="138.300" width="13.300" height="14.500" rx="1"/><rect x="20.500" y="138.300" width="13.300" height="14.500" rx="1"/><rect x="37.500" y="138.300" width="13.300" height="14.500" rx="1"/><rect x="54.600" y="138.300" width="13.300" height="14.500" rx="1"/><rect x="71.700" y="138.300" width="13.300" height="14.500" rx="1"/></g><g fill="none" stroke-width="1"><path d="M6.5,137.5 V148.5 M6.5,139.5 H9.5 M9.5,142 H14.5 M9.5,145 H14.5 M9.5,148 H14.5 M9.5,139.5 V148.5" stroke="#333"/><rect x="22.5" y="140.5" width="7" height="7" stroke="#2a7a5a"/><rect x="26.5" y="137.8" width="5.5" height="5.5" stroke="#2a9a6a" fill="#cfeedd"/><path d="M27,146 l2,2 l3,-4" stroke="#2a9a4a"/><path d="M40,141 L47.5,138 V148.5 L40,146 Z" stroke="#5a8a7a" fill="#e4efe9"/><path d="M43.5,141.5 h4 M43.5,144 h4 M43.5,146.5 h4" stroke="#9ab"/><path d="M56.700,140.800 H65.300 L62.300,144.300 V150.500 L59.700,149.800 V144.300 Z" fill="#2f7fc4" stroke="#1d5f9c" stroke-width="0.700"/><path d="M64.500,143 a2,2 0 0 1 0,4" stroke="#8ab" stroke-width="0.800"/><path d="M73.800,140.800 H82.800 L79.600,144.300 V150.500 L77,149.800 V144.300 Z" fill="#5a9ccc" stroke="#4a88b4" stroke-width="0.700"/><path d="M73.800,141 H82.800" stroke="#b8a868" stroke-width="1.200"/></g></svg><div class="a" style="left:0;top:25.69999999999999px;width:86.9px;height:14.6px;background:linear-gradient(#cdcdcd,#bdbdbd)"></div><div class="a" style="left:76.5px;top:31.19999999999999px;width:0;height:0;border-left:2.6px solid transparent;border-right:2.6px solid transparent;border-bottom:3.2px solid #222"></div><div class="a" style="left:0;top:40.29999999999998px;width:86.9px;height:14.3px;background:#fff;border-bottom:1px solid #d4d4d4"></div><div class="a" style="left:10.3px;top:40.29999999999998px;width:1px;height:14.3px;background:#d4d4d4"></div><div class="a" style="left:0;top:40.29999999999998px;width:10.3px;height:13.3px;background:#fafafa"></div><div class="a" style="left:13.5px;top:42.69999999999998px;width:8.5px;height:9px;background:#20e020;border:0.6px solid #1a7a1a"></div><span class="t" style="left:13.5px;top:43.899999999999984px;font-size:7.2px;color:#222;letter-spacing:-0.15px"><span style="margin-left:9.5px">ByLayer</span></span><div class="a" style="left:0;top:54.599999999999994px;width:86.9px;height:14.3px;background:#fff;border-bottom:1px solid #d4d4d4"></div><div class="a" style="left:10.3px;top:54.599999999999994px;width:1px;height:14.3px;background:#d4d4d4"></div><div class="a" style="left:0;top:54.599999999999994px;width:10.3px;height:13.3px;background:#fafafa"></div><span class="t" style="left:13.5px;top:58.199999999999996px;font-size:7.2px;color:#222;letter-spacing:-0.15px">Lot Lines</span><div class="a" style="left:0;top:68.9px;width:86.9px;height:14.3px;background:#fff;border-bottom:1px solid #d4d4d4"></div><div class="a" style="left:10.3px;top:68.9px;width:1px;height:14.3px;background:#d4d4d4"></div><div class="a" style="left:0;top:68.9px;width:10.3px;height:13.3px;background:#fafafa"></div><div class="a" style="left:13.5px;top:76.30000000000001px;width:20px;height:1px;background:#333"></div><span class="t" style="left:13.5px;top:72.5px;font-size:7.2px;color:#222;letter-spacing:-0.15px"><span style="margin-left:23.5px">ByLayer</span></span><div class="a" style="left:0;top:83.20000000000002px;width:86.9px;height:14.3px;background:#fff;border-bottom:1px solid #d4d4d4"></div><div class="a" style="left:10.3px;top:83.20000000000002px;width:1px;height:14.3px;background:#d4d4d4"></div><div class="a" style="left:0;top:83.20000000000002px;width:10.3px;height:13.3px;background:#fafafa"></div><span class="t" style="left:13.5px;top:86.80000000000001px;font-size:7.2px;color:#222;letter-spacing:-0.15px">1.000</span><div class="a" style="left:0;top:97.50000000000003px;width:86.9px;height:14.3px;background:#fff;border-bottom:1px solid #d4d4d4"></div><div class="a" style="left:10.3px;top:97.50000000000003px;width:1px;height:14.3px;background:#d4d4d4"></div><div class="a" style="left:0;top:97.50000000000003px;width:10.3px;height:13.3px;background:#fafafa"></div><div class="a" style="left:13.5px;top:104.90000000000003px;width:20px;height:1px;background:#333"></div><span class="t" style="left:13.5px;top:101.10000000000002px;font-size:7.2px;color:#222;letter-spacing:-0.15px"><span style="margin-left:23.5px">ByLayer</span></span><div class="a" style="left:0;top:111.80000000000004px;width:86.9px;height:14.3px;background:#fff;border-bottom:1px solid #d4d4d4"></div><div class="a" style="left:10.3px;top:111.80000000000004px;width:1px;height:14.3px;background:#d4d4d4"></div><div class="a" style="left:0;top:111.80000000000004px;width:10.3px;height:13.3px;background:#fafafa"></div><span class="t" style="left:13.5px;top:115.40000000000003px;font-size:7.2px;color:#222;letter-spacing:-0.15px">945.970</span><div class="a" style="left:0;top:126.10000000000002px;width:86.9px;height:14.3px;background:#fff;border-bottom:1px solid #d4d4d4"></div><div class="a" style="left:10.3px;top:126.10000000000002px;width:1px;height:14.3px;background:#d4d4d4"></div><div class="a" style="left:0;top:126.10000000000002px;width:10.3px;height:13.3px;background:#fafafa"></div><span class="t" style="left:13.5px;top:129.70000000000002px;font-size:7.2px;color:#222;letter-spacing:-0.15px">0</span><div class="a" style="left:0;top:140.40000000000003px;width:86.9px;height:14.3px;background:#fff;border-bottom:1px solid #d4d4d4"></div><div class="a" style="left:10.3px;top:140.40000000000003px;width:1px;height:14.3px;background:#d4d4d4"></div><div class="a" style="left:0;top:140.40000000000003px;width:10.3px;height:13.3px;background:#fafafa"></div><span class="t" style="left:13.5px;top:144.00000000000003px;font-size:7.2px;color:#222;letter-spacing:-0.15px">ByLayer</span><div class="a" style="left:0;top:157.7px;width:86.9px;height:14.6px;background:linear-gradient(#cdcdcd,#bdbdbd)"></div><div class="a" style="left:76.5px;top:163.2px;width:0;height:0;border-left:2.6px solid transparent;border-right:2.6px solid transparent;border-bottom:3.2px solid #222"></div><div class="a" style="left:0;top:172.3px;width:86.9px;height:14.3px;background:#fff;border-bottom:1px solid #d4d4d4"></div><div class="a" style="left:10.3px;top:172.3px;width:1px;height:14.3px;background:#d4d4d4"></div><div class="a" style="left:0;top:172.3px;width:10.3px;height:13.3px;background:#fafafa"></div><span class="t" style="left:13.5px;top:175.9px;font-size:7.2px;color:#222;letter-spacing:-0.15px">ByLayer</span><div class="a" style="left:0;top:186.60000000000002px;width:86.9px;height:14.3px;background:#ececec;border-bottom:1px solid #d4d4d4"></div><div class="a" style="left:10.3px;top:186.60000000000002px;width:1px;height:14.3px;background:#d4d4d4"></div><div class="a" style="left:0;top:186.60000000000002px;width:10.3px;height:13.3px;background:#fafafa"></div><span class="t" style="left:13.5px;top:190.20000000000002px;font-size:7.2px;color:#222;letter-spacing:-0.15px">Shadows cast and re...</span><div class="a" style="left:0;top:203px;width:86.9px;height:14.6px;background:linear-gradient(#cdcdcd,#bdbdbd)"></div><div class="a" style="left:76.5px;top:208.5px;width:0;height:0;border-left:2.6px solid transparent;border-right:2.6px solid transparent;border-bottom:3.2px solid #222"></div><div class="a" style="left:0;top:217.60000000000002px;width:86.9px;height:14.3px;background:#ececec;border-bottom:1px solid #d4d4d4"></div><div class="a" style="left:10.3px;top:217.60000000000002px;width:1px;height:14.3px;background:#d4d4d4"></div><div class="a" style="left:0;top:217.60000000000002px;width:10.3px;height:13.3px;background:#fafafa"></div><span class="t" style="left:13.5px;top:221.20000000000002px;font-size:7.2px;color:#222;letter-spacing:-0.15px">ByColor</span><div class="a" style="left:0;top:231.90000000000003px;width:86.9px;height:14.3px;background:#fff;border-bottom:1px solid #d4d4d4"></div><div class="a" style="left:10.3px;top:231.90000000000003px;width:1px;height:14.3px;background:#d4d4d4"></div><div class="a" style="left:0;top:231.90000000000003px;width:10.3px;height:13.3px;background:#fafafa"></div><span class="t" style="left:13.5px;top:235.50000000000003px;font-size:7.2px;color:#222;letter-spacing:-0.15px">None</span><div class="a" style="left:0;top:246.20000000000005px;width:86.9px;height:14.3px;background:#ececec;border-bottom:1px solid #d4d4d4"></div><div class="a" style="left:10.3px;top:246.20000000000005px;width:1px;height:14.3px;background:#d4d4d4"></div><div class="a" style="left:0;top:246.20000000000005px;width:10.3px;height:13.3px;background:#fafafa"></div><span class="t" style="left:-1px;top:249.80000000000004px;font-size:7.2px;color:#333">to</span><span class="t" style="left:13.5px;top:249.80000000000004px;font-size:7.2px;color:#222;letter-spacing:-0.15px">Model</span><div class="a" style="left:0;top:260.50000000000006px;width:86.9px;height:14.3px;background:#fff;border-bottom:1px solid #d4d4d4"></div><div class="a" style="left:10.3px;top:260.50000000000006px;width:1px;height:14.3px;background:#d4d4d4"></div><div class="a" style="left:0;top:260.50000000000006px;width:10.3px;height:13.3px;background:#fafafa"></div><span class="t" style="left:13.5px;top:264.1000000000001px;font-size:7.2px;color:#222;letter-spacing:-0.15px">Color-dependent print...</span><div class="a" style="left:0;top:277.8px;width:86.9px;height:14.6px;background:linear-gradient(#cdcdcd,#bdbdbd)"></div><div class="a" style="left:76.5px;top:283.3px;width:0;height:0;border-left:2.6px solid transparent;border-right:2.6px solid transparent;border-bottom:3.2px solid #222"></div><div class="a" style="left:0;top:292.40000000000003px;width:86.9px;height:14.3px;background:#fff;border-bottom:1px solid #d4d4d4"></div><div class="a" style="left:10.3px;top:292.40000000000003px;width:1px;height:14.3px;background:#d4d4d4"></div><div class="a" style="left:0;top:292.40000000000003px;width:10.3px;height:13.3px;background:#fafafa"></div><span class="t" style="left:13.5px;top:296.00000000000006px;font-size:7.2px;color:#222;letter-spacing:-0.15px">-97.979</span><div class="a" style="left:0;top:306.70000000000005px;width:86.9px;height:14.3px;background:#fff;border-bottom:1px solid #d4d4d4"></div><div class="a" style="left:10.3px;top:306.70000000000005px;width:1px;height:14.3px;background:#d4d4d4"></div><div class="a" style="left:0;top:306.70000000000005px;width:10.3px;height:13.3px;background:#fafafa"></div><span class="t" style="left:13.5px;top:310.30000000000007px;font-size:7.2px;color:#222;letter-spacing:-0.15px">6189865.577</span><div class="a" style="left:0;top:321.00000000000006px;width:86.9px;height:14.3px;background:#fff;border-bottom:1px solid #d4d4d4"></div><div class="a" style="left:10.3px;top:321.00000000000006px;width:1px;height:14.3px;background:#d4d4d4"></div><div class="a" style="left:0;top:321.00000000000006px;width:10.3px;height:13.3px;background:#fafafa"></div><span class="t" style="left:13.5px;top:324.6000000000001px;font-size:7.2px;color:#222;letter-spacing:-0.15px">0</span><div class="a" style="left:0;top:335.30000000000007px;width:86.9px;height:14.3px;background:#fff;border-bottom:1px solid #d4d4d4"></div><div class="a" style="left:10.3px;top:335.30000000000007px;width:1px;height:14.3px;background:#d4d4d4"></div><div class="a" style="left:0;top:335.30000000000007px;width:10.3px;height:13.3px;background:#fafafa"></div><span class="t" style="left:13.5px;top:338.9000000000001px;font-size:7.2px;color:#222;letter-spacing:-0.15px">945.970</span><div class="a" style="left:0;top:349.6000000000001px;width:86.9px;height:14.3px;background:#fff;border-bottom:1px solid #d4d4d4"></div><div class="a" style="left:10.3px;top:349.6000000000001px;width:1px;height:14.3px;background:#d4d4d4"></div><div class="a" style="left:0;top:349.6000000000001px;width:10.3px;height:13.3px;background:#fafafa"></div><span class="t" style="left:13.5px;top:353.2000000000001px;font-size:7.2px;color:#222;letter-spacing:-0.15px">382.879</span><div class="a" style="left:0;top:366.3px;width:86.9px;height:14.6px;background:linear-gradient(#cdcdcd,#bdbdbd)"></div><div class="a" style="left:76.5px;top:371.8px;width:0;height:0;border-left:2.6px solid transparent;border-right:2.6px solid transparent;border-bottom:3.2px solid #222"></div><div class="a" style="left:0;top:380.9px;width:86.9px;height:14.3px;background:#fff;border-bottom:1px solid #d4d4d4"></div><div class="a" style="left:10.3px;top:380.9px;width:1px;height:14.3px;background:#d4d4d4"></div><div class="a" style="left:0;top:380.9px;width:10.3px;height:13.3px;background:#fafafa"></div><span class="t" style="left:13.5px;top:384.5px;font-size:7.2px;color:#222;letter-spacing:-0.15px">2D Wireframe</span><div class="a" style="left:0;top:395.19999999999993px;width:86.9px;height:14.3px;background:#fff;border-bottom:1px solid #d4d4d4"></div><div class="a" style="left:10.3px;top:395.19999999999993px;width:1px;height:14.3px;background:#d4d4d4"></div><div class="a" style="left:0;top:395.19999999999993px;width:10.3px;height:13.3px;background:#fafafa"></div><span class="t" style="left:13.5px;top:398.79999999999995px;font-size:7.2px;color:#222;letter-spacing:-0.15px">On</span><div class="a" style="left:0;top:409.4999999999999px;width:86.9px;height:14.3px;background:#fff;border-bottom:1px solid #d4d4d4"></div><div class="a" style="left:10.3px;top:409.4999999999999px;width:1px;height:14.3px;background:#d4d4d4"></div><div class="a" style="left:0;top:409.4999999999999px;width:10.3px;height:13.3px;background:#fafafa"></div><span class="t" style="left:13.5px;top:413.0999999999999px;font-size:7.2px;color:#222;letter-spacing:-0.15px">None</span><div class="a" style="left:0;top:423.79999999999984px;width:86.9px;height:14.3px;background:#fff;border-bottom:1px solid #d4d4d4"></div><div class="a" style="left:10.3px;top:423.79999999999984px;width:1px;height:14.3px;background:#d4d4d4"></div><div class="a" style="left:0;top:423.79999999999984px;width:10.3px;height:13.3px;background:#fafafa"></div><span class="t" style="left:13.5px;top:427.39999999999986px;font-size:7.2px;color:#222;letter-spacing:-0.15px">0</span></div>
<svg class="a" style="left:93.7px;top:119.6px" width="986.3" height="434.1" viewBox="93.7 119.6 986.3 434.1"><rect x="93.7" y="119.6" width="986.3" height="434.1" fill="#000"/><g><g fill="none" stroke="#8c8498" stroke-width="1.05" stroke-dasharray="12 2.7 1.6 2.7"><path d="M96,126 L1080,497.5"/><path d="M97.5,152.5 L833,554"/></g><g fill="none" stroke="#82749a" stroke-width="0.9" stroke-dasharray="4.5 2.3"><path d="M164.2,322.5 V281.7 H205"/><path d="M259.2,281.7 H300 V322.5"/><path d="M415.5,378 V418.2 H456.2"/><path d="M510.5,417.5 H550.7 V377.5"/><path d="M680,376.5 V300 L746,338.6"/><path d="M780.2,174.3 L901.2,240.5 V119"/><path d="M931.7,159.2 V199.2 L1080,187.4"/><path d="M1025,143 L1080,147.6"/><path d="M1080,238.4 L969,310 L1080,412"/><path d="M1036,387.6 L1063,411.5 L1080,427"/><path d="M1063,411.5 L1080,391.5"/><path d="M785,481.2 V453.7 L808.7,467"/><path d="M793,494.5 V467.5 L816.2,480.5"/><path d="M913.7,278.7 L937,291.5 L927.5,266.2"/><path d="M922.7,289.5 L946,302.5 L936.4,277.6"/><path d="M619.2,223 V195.5 L643,209.25"/><path d="M627,236.7 V209.5 L650.6,223.1"/></g><g fill="none" stroke="#7e729e" stroke-width="0.9" stroke-dasharray="7 3"><path d="M96,316 H164.2 A34,34 0 0 0 198.2,281.7 V119"/><path d="M266.2,119 V281.7 A34,34 0 0 0 300,315.7 H680 A15.2,15.2 0 0 0 693,307.6 L774.3,170.9 A143.7,143.7 0 0 1 823.3,119"/><path d="M93,385 H415.5 A34,34 0 0 1 449.5,418.2 V554"/><path d="M517,554 V417.5 A33.7,33.7 0 0 1 550.7,383.8 H680 A83.8,83.8 0 0 0 752,342.6 L835.2,203.6 A74.6,74.6 0 0 1 900,165.9 H931.7 A33.4,33.4 0 0 1 965.1,199.2 C965.7,203.2 966.7,215.0 968.5,223.0 C970.3,231.0 973.2,239.3 976.0,247.0 C978.8,254.7 981.4,261.6 985.0,269.0 C988.6,276.4 995.7,287.8 997.8,291.5 A34.3,34.3 0 0 1 994.7,333 C990.1,339.0 974.3,358.5 967.0,369.0 C959.7,379.5 957.7,384.2 951.0,396.0 C944.3,407.8 934.8,423.3 927.0,440.0 C919.2,456.7 912.4,477.0 904.5,496.0 C896.6,515.0 883.7,544.3 879.5,554.0"/><path d="M1080.0,379.2 C1075.8,378.8 1061.7,375.4 1055.0,376.5 C1048.3,377.6 1044.0,382.2 1040.0,385.5 C1036.0,388.8 1035.5,390.6 1031.0,396.0 C1026.5,401.4 1019.7,406.7 1013.0,418.0 C1006.3,429.3 997.2,449.6 991.0,464.0 C984.8,478.4 982.2,489.5 976.0,504.5 C969.8,519.5 957.4,545.8 953.7,554.0"/><path d="M1031.7,119 V186 C1032.3,190.0 1033.5,202.7 1035.5,210.0 C1037.5,217.3 1040.8,223.0 1044.0,230.0 C1047.2,237.0 1050.7,244.7 1055.0,252.0 C1059.3,259.3 1065.8,268.8 1070.0,274.0 C1074.2,279.2 1078.3,281.5 1080.0,283.0"/><path d="M488.7,119 C491.4,119.7 498.4,122.1 505.0,123.0 C511.6,123.9 520.2,124.6 528.0,124.6 C535.8,124.6 545.2,123.9 552.0,123.0 C558.8,122.1 565.9,119.7 568.7,119.0"/></g><g fill="none" stroke="#8282bc" stroke-width="0.9"><path d="M100.8,119 V322.5"/><path d="M101.2,378 V482.3 H456.2"/><path d="M456.2,495 H101.2 V554"/><path d="M510.5,481.2 H785 A27.5,27.5 0 0 0 808.7,467 L913.7,278.7 A26.7,26.7 0 0 1 927.5,266.2 L982.5,245"/><path d="M510.5,494.5 H793 A27,27 0 0 0 816.2,480.5 L922.7,289.5 A26.7,26.7 0 0 1 936.4,277.6 L987.5,257.5"/><path d="M357,119 V236.7 H627 A27.2,27.2 0 0 0 650.6,223.1 L713,119"/><path d="M370.7,119 V223 H619.2 A27.5,27.5 0 0 0 643,209.25 L696.5,119"/><path d="M1080,520 L1065,554"/></g><g fill="none" stroke="#48a846" stroke-width="0.9"><path d="M93,322.5 H164.2 A40.8,40.8 0 0 0 205,281.7 V119"/><path d="M259.2,119 V281.7 A40.8,40.8 0 0 0 300,322.5 H680 A21.7,21.7 0 0 0 698.8,310.85 L780.2,174.3 A137,137 0 0 1 836.7,119"/><path d="M93,378 H415.5 A40.8,40.8 0 0 1 456.2,418.2 V554"/><path d="M510.5,554 V417.5 A40.2,40.2 0 0 1 550.7,377.5 H680 A77,77 0 0 0 746,339.2 L828.3,199.7 A81.3,81.3 0 0 1 900,159.2 H931.7 A40,40 0 0 1 971.7,199.2 C972.2,203.0 973.2,214.4 975.0,222.0 C976.8,229.6 979.8,237.7 982.5,245.0 C985.2,252.3 987.5,258.9 991.0,266.0 C994.5,273.1 1001.3,284.2 1003.4,287.8 A41,41 0 0 1 999.7,337.2 C995.2,343.1 979.5,362.7 972.5,372.5 C965.5,382.3 964.2,384.3 957.5,396.0 C950.8,407.7 940.4,425.2 932.5,442.5 C924.6,459.8 917.9,481.4 910.0,500.0 C902.1,518.6 889.2,545.0 885.0,554.0"/><path d="M1080.0,372.0 C1076.1,371.6 1063.4,368.7 1056.7,369.4 C1050.0,370.1 1044.8,372.7 1039.8,376.0 C1034.8,379.3 1032.4,382.5 1027.0,389.0 C1021.6,395.5 1014.5,402.8 1007.5,415.0 C1000.5,427.2 991.2,447.9 985.0,462.5 C978.8,477.1 976.5,487.2 970.0,502.5 C963.5,517.8 950.0,545.4 946.0,554.0"/><path d="M1025,119 V186 C1025.7,190.3 1026.9,204.3 1029.0,212.0 C1031.1,219.7 1034.0,224.7 1037.5,232.0 C1041.0,239.3 1045.2,248.0 1050.0,256.0 C1054.8,264.0 1061.0,273.9 1066.0,280.0 C1071.0,286.1 1077.7,290.4 1080.0,292.5"/></g><g fill="#c03030"><circle cx="183.7" cy="281.7" r="0.9"/><circle cx="164.2" cy="301" r="0.9"/><circle cx="280" cy="281.7" r="0.9"/><circle cx="300" cy="301" r="0.9"/><circle cx="415.5" cy="398" r="0.9"/><circle cx="436" cy="418.2" r="0.9"/><circle cx="530" cy="417.5" r="0.9"/><circle cx="550.7" cy="398" r="0.9"/><circle cx="445" cy="258" r="0.9"/><circle cx="901.2" cy="131" r="0.9"/><circle cx="862.5" cy="218.7" r="0.9"/><circle cx="931.7" cy="177.5" r="0.9"/><circle cx="952.5" cy="196.5" r="0.9"/><circle cx="1070" cy="188" r="0.9"/><circle cx="1000" cy="290" r="0.9"/><circle cx="1052" cy="395" r="0.9"/><circle cx="1046" cy="399" r="0.9"/><circle cx="785" cy="467" r="0.9"/><circle cx="797" cy="460.5" r="0.9"/><circle cx="793" cy="481" r="0.9"/><circle cx="804" cy="474" r="0.9"/><circle cx="619.2" cy="209" r="0.9"/><circle cx="631" cy="202.3" r="0.9"/><circle cx="627" cy="223" r="0.9"/><circle cx="638.5" cy="216.3" r="0.9"/><circle cx="925" cy="285" r="0.9"/><circle cx="932" cy="279" r="0.9"/><circle cx="934" cy="296" r="0.9"/><circle cx="941" cy="290" r="0.9"/></g><g fill="#bcbcbc"><circle cx="164.2" cy="322.5" r="0.75"/><circle cx="205" cy="281.7" r="0.75"/><circle cx="164.2" cy="281.7" r="0.75"/><circle cx="259.2" cy="281.7" r="0.75"/><circle cx="300" cy="281.7" r="0.75"/><circle cx="300" cy="322.5" r="0.75"/><circle cx="100.8" cy="322.5" r="0.75"/><circle cx="101.2" cy="378" r="0.75"/><circle cx="101.2" cy="482.3" r="0.75"/><circle cx="101.2" cy="495" r="0.75"/><circle cx="415.5" cy="378" r="0.75"/><circle cx="415.5" cy="418.2" r="0.75"/><circle cx="456.2" cy="418.2" r="0.75"/><circle cx="510.5" cy="417.5" r="0.75"/><circle cx="550.7" cy="417.5" r="0.75"/><circle cx="550.7" cy="377.5" r="0.75"/><circle cx="456.2" cy="482.3" r="0.75"/><circle cx="456.2" cy="495" r="0.75"/><circle cx="510.5" cy="481.2" r="0.75"/><circle cx="510.5" cy="494.5" r="0.75"/><circle cx="357" cy="236.7" r="0.75"/><circle cx="370.7" cy="223" r="0.75"/><circle cx="680" cy="321.7" r="0.75"/><circle cx="680" cy="376.5" r="0.75"/><circle cx="698.8" cy="310.85" r="0.75"/><circle cx="785" cy="481.2" r="0.75"/><circle cx="793" cy="494.5" r="0.75"/><circle cx="785" cy="453.7" r="0.75"/><circle cx="793" cy="467.5" r="0.75"/><circle cx="808.7" cy="467" r="0.75"/><circle cx="816.2" cy="480.5" r="0.75"/><circle cx="619.2" cy="223" r="0.75"/><circle cx="627" cy="236.7" r="0.75"/><circle cx="619.2" cy="195.5" r="0.75"/><circle cx="627" cy="209.5" r="0.75"/><circle cx="643" cy="209.25" r="0.75"/><circle cx="650.6" cy="223.1" r="0.75"/><circle cx="901.2" cy="240.5" r="0.75"/><circle cx="931.7" cy="159.2" r="0.75"/><circle cx="901.2" cy="159.2" r="0.75"/><circle cx="931.7" cy="199.2" r="0.75"/><circle cx="972" cy="193.7" r="0.75"/><circle cx="982.5" cy="245" r="0.75"/><circle cx="987.5" cy="257.5" r="0.75"/><circle cx="913.7" cy="278.7" r="0.75"/><circle cx="927.5" cy="266.2" r="0.75"/><circle cx="922.7" cy="289.5" r="0.75"/><circle cx="936.4" cy="277.6" r="0.75"/><circle cx="937" cy="291.5" r="0.75"/><circle cx="946" cy="302.5" r="0.75"/><circle cx="969" cy="310" r="0.75"/><circle cx="999.7" cy="337.2" r="0.75"/><circle cx="1025" cy="143" r="0.75"/><circle cx="1025" cy="191.8" r="0.75"/><circle cx="932.5" cy="441.8" r="0.75"/><circle cx="985.5" cy="462" r="0.75"/><circle cx="1039.8" cy="376" r="0.75"/><circle cx="780.2" cy="174.3" r="0.75"/><circle cx="1063" cy="411.5" r="0.75"/></g><rect x="458.2" y="172.5" width="348.00000000000006" height="174.5" fill="#1e3a68"/><svg x="458.2" y="172.5" width="348.00000000000006" height="174.5" viewBox="458.2 172.5 348.00000000000006 174.5"><g fill="none" stroke="#a87cb4" stroke-width="1.05" stroke-dasharray="12 2.7 1.6 2.7"><path d="M96,126 L1080,497.5"/><path d="M97.5,152.5 L833,554"/></g><g fill="none" stroke="#c070b4" stroke-width="0.9" stroke-dasharray="4.5 2.3"><path d="M164.2,322.5 V281.7 H205"/><path d="M259.2,281.7 H300 V322.5"/><path d="M415.5,378 V418.2 H456.2"/><path d="M510.5,417.5 H550.7 V377.5"/><path d="M680,376.5 V300 L746,338.6"/><path d="M780.2,174.3 L901.2,240.5 V119"/><path d="M931.7,159.2 V199.2 L1080,187.4"/><path d="M1025,143 L1080,147.6"/><path d="M1080,238.4 L969,310 L1080,412"/><path d="M1036,387.6 L1063,411.5 L1080,427"/><path d="M1063,411.5 L1080,391.5"/><path d="M785,481.2 V453.7 L808.7,467"/><path d="M793,494.5 V467.5 L816.2,480.5"/><path d="M913.7,278.7 L937,291.5 L927.5,266.2"/><path d="M922.7,289.5 L946,302.5 L936.4,277.6"/><path d="M619.2,223 V195.5 L643,209.25"/><path d="M627,236.7 V209.5 L650.6,223.1"/></g><g fill="none" stroke="#9a74b8" stroke-width="0.9" stroke-dasharray="7 3"><path d="M96,316 H164.2 A34,34 0 0 0 198.2,281.7 V119"/><path d="M266.2,119 V281.7 A34,34 0 0 0 300,315.7 H680 A15.2,15.2 0 0 0 693,307.6 L774.3,170.9 A143.7,143.7 0 0 1 823.3,119"/><path d="M93,385 H415.5 A34,34 0 0 1 449.5,418.2 V554"/><path d="M517,554 V417.5 A33.7,33.7 0 0 1 550.7,383.8 H680 A83.8,83.8 0 0 0 752,342.6 L835.2,203.6 A74.6,74.6 0 0 1 900,165.9 H931.7 A33.4,33.4 0 0 1 965.1,199.2 C965.7,203.2 966.7,215.0 968.5,223.0 C970.3,231.0 973.2,239.3 976.0,247.0 C978.8,254.7 981.4,261.6 985.0,269.0 C988.6,276.4 995.7,287.8 997.8,291.5 A34.3,34.3 0 0 1 994.7,333 C990.1,339.0 974.3,358.5 967.0,369.0 C959.7,379.5 957.7,384.2 951.0,396.0 C944.3,407.8 934.8,423.3 927.0,440.0 C919.2,456.7 912.4,477.0 904.5,496.0 C896.6,515.0 883.7,544.3 879.5,554.0"/><path d="M1080.0,379.2 C1075.8,378.8 1061.7,375.4 1055.0,376.5 C1048.3,377.6 1044.0,382.2 1040.0,385.5 C1036.0,388.8 1035.5,390.6 1031.0,396.0 C1026.5,401.4 1019.7,406.7 1013.0,418.0 C1006.3,429.3 997.2,449.6 991.0,464.0 C984.8,478.4 982.2,489.5 976.0,504.5 C969.8,519.5 957.4,545.8 953.7,554.0"/><path d="M1031.7,119 V186 C1032.3,190.0 1033.5,202.7 1035.5,210.0 C1037.5,217.3 1040.8,223.0 1044.0,230.0 C1047.2,237.0 1050.7,244.7 1055.0,252.0 C1059.3,259.3 1065.8,268.8 1070.0,274.0 C1074.2,279.2 1078.3,281.5 1080.0,283.0"/><path d="M488.7,119 C491.4,119.7 498.4,122.1 505.0,123.0 C511.6,123.9 520.2,124.6 528.0,124.6 C535.8,124.6 545.2,123.9 552.0,123.0 C558.8,122.1 565.9,119.7 568.7,119.0"/></g><g fill="none" stroke="#7c6cc4" stroke-width="0.9"><path d="M100.8,119 V322.5"/><path d="M101.2,378 V482.3 H456.2"/><path d="M456.2,495 H101.2 V554"/><path d="M510.5,481.2 H785 A27.5,27.5 0 0 0 808.7,467 L913.7,278.7 A26.7,26.7 0 0 1 927.5,266.2 L982.5,245"/><path d="M510.5,494.5 H793 A27,27 0 0 0 816.2,480.5 L922.7,289.5 A26.7,26.7 0 0 1 936.4,277.6 L987.5,257.5"/><path d="M357,119 V236.7 H627 A27.2,27.2 0 0 0 650.6,223.1 L713,119"/><path d="M370.7,119 V223 H619.2 A27.5,27.5 0 0 0 643,209.25 L696.5,119"/><path d="M1080,520 L1065,554"/></g><g fill="none" stroke="#4fc0a0" stroke-width="0.9"><path d="M93,322.5 H164.2 A40.8,40.8 0 0 0 205,281.7 V119"/><path d="M259.2,119 V281.7 A40.8,40.8 0 0 0 300,322.5 H680 A21.7,21.7 0 0 0 698.8,310.85 L780.2,174.3 A137,137 0 0 1 836.7,119"/><path d="M93,378 H415.5 A40.8,40.8 0 0 1 456.2,418.2 V554"/><path d="M510.5,554 V417.5 A40.2,40.2 0 0 1 550.7,377.5 H680 A77,77 0 0 0 746,339.2 L828.3,199.7 A81.3,81.3 0 0 1 900,159.2 H931.7 A40,40 0 0 1 971.7,199.2 C972.2,203.0 973.2,214.4 975.0,222.0 C976.8,229.6 979.8,237.7 982.5,245.0 C985.2,252.3 987.5,258.9 991.0,266.0 C994.5,273.1 1001.3,284.2 1003.4,287.8 A41,41 0 0 1 999.7,337.2 C995.2,343.1 979.5,362.7 972.5,372.5 C965.5,382.3 964.2,384.3 957.5,396.0 C950.8,407.7 940.4,425.2 932.5,442.5 C924.6,459.8 917.9,481.4 910.0,500.0 C902.1,518.6 889.2,545.0 885.0,554.0"/><path d="M1080.0,372.0 C1076.1,371.6 1063.4,368.7 1056.7,369.4 C1050.0,370.1 1044.8,372.7 1039.8,376.0 C1034.8,379.3 1032.4,382.5 1027.0,389.0 C1021.6,395.5 1014.5,402.8 1007.5,415.0 C1000.5,427.2 991.2,447.9 985.0,462.5 C978.8,477.1 976.5,487.2 970.0,502.5 C963.5,517.8 950.0,545.4 946.0,554.0"/><path d="M1025,119 V186 C1025.7,190.3 1026.9,204.3 1029.0,212.0 C1031.1,219.7 1034.0,224.7 1037.5,232.0 C1041.0,239.3 1045.2,248.0 1050.0,256.0 C1054.8,264.0 1061.0,273.9 1066.0,280.0 C1071.0,286.1 1077.7,290.4 1080.0,292.5"/></g><g fill="#e060b0"><circle cx="183.7" cy="281.7" r="0.9"/><circle cx="164.2" cy="301" r="0.9"/><circle cx="280" cy="281.7" r="0.9"/><circle cx="300" cy="301" r="0.9"/><circle cx="415.5" cy="398" r="0.9"/><circle cx="436" cy="418.2" r="0.9"/><circle cx="530" cy="417.5" r="0.9"/><circle cx="550.7" cy="398" r="0.9"/><circle cx="445" cy="258" r="0.9"/><circle cx="901.2" cy="131" r="0.9"/><circle cx="862.5" cy="218.7" r="0.9"/><circle cx="931.7" cy="177.5" r="0.9"/><circle cx="952.5" cy="196.5" r="0.9"/><circle cx="1070" cy="188" r="0.9"/><circle cx="1000" cy="290" r="0.9"/><circle cx="1052" cy="395" r="0.9"/><circle cx="1046" cy="399" r="0.9"/><circle cx="785" cy="467" r="0.9"/><circle cx="797" cy="460.5" r="0.9"/><circle cx="793" cy="481" r="0.9"/><circle cx="804" cy="474" r="0.9"/><circle cx="619.2" cy="209" r="0.9"/><circle cx="631" cy="202.3" r="0.9"/><circle cx="627" cy="223" r="0.9"/><circle cx="638.5" cy="216.3" r="0.9"/><circle cx="925" cy="285" r="0.9"/><circle cx="932" cy="279" r="0.9"/><circle cx="934" cy="296" r="0.9"/><circle cx="941" cy="290" r="0.9"/></g><g fill="#b8c0e0"><circle cx="164.2" cy="322.5" r="0.75"/><circle cx="205" cy="281.7" r="0.75"/><circle cx="164.2" cy="281.7" r="0.75"/><circle cx="259.2" cy="281.7" r="0.75"/><circle cx="300" cy="281.7" r="0.75"/><circle cx="300" cy="322.5" r="0.75"/><circle cx="100.8" cy="322.5" r="0.75"/><circle cx="101.2" cy="378" r="0.75"/><circle cx="101.2" cy="482.3" r="0.75"/><circle cx="101.2" cy="495" r="0.75"/><circle cx="415.5" cy="378" r="0.75"/><circle cx="415.5" cy="418.2" r="0.75"/><circle cx="456.2" cy="418.2" r="0.75"/><circle cx="510.5" cy="417.5" r="0.75"/><circle cx="550.7" cy="417.5" r="0.75"/><circle cx="550.7" cy="377.5" r="0.75"/><circle cx="456.2" cy="482.3" r="0.75"/><circle cx="456.2" cy="495" r="0.75"/><circle cx="510.5" cy="481.2" r="0.75"/><circle cx="510.5" cy="494.5" r="0.75"/><circle cx="357" cy="236.7" r="0.75"/><circle cx="370.7" cy="223" r="0.75"/><circle cx="680" cy="321.7" r="0.75"/><circle cx="680" cy="376.5" r="0.75"/><circle cx="698.8" cy="310.85" r="0.75"/><circle cx="785" cy="481.2" r="0.75"/><circle cx="793" cy="494.5" r="0.75"/><circle cx="785" cy="453.7" r="0.75"/><circle cx="793" cy="467.5" r="0.75"/><circle cx="808.7" cy="467" r="0.75"/><circle cx="816.2" cy="480.5" r="0.75"/><circle cx="619.2" cy="223" r="0.75"/><circle cx="627" cy="236.7" r="0.75"/><circle cx="619.2" cy="195.5" r="0.75"/><circle cx="627" cy="209.5" r="0.75"/><circle cx="643" cy="209.25" r="0.75"/><circle cx="650.6" cy="223.1" r="0.75"/><circle cx="901.2" cy="240.5" r="0.75"/><circle cx="931.7" cy="159.2" r="0.75"/><circle cx="901.2" cy="159.2" r="0.75"/><circle cx="931.7" cy="199.2" r="0.75"/><circle cx="972" cy="193.7" r="0.75"/><circle cx="982.5" cy="245" r="0.75"/><circle cx="987.5" cy="257.5" r="0.75"/><circle cx="913.7" cy="278.7" r="0.75"/><circle cx="927.5" cy="266.2" r="0.75"/><circle cx="922.7" cy="289.5" r="0.75"/><circle cx="936.4" cy="277.6" r="0.75"/><circle cx="937" cy="291.5" r="0.75"/><circle cx="946" cy="302.5" r="0.75"/><circle cx="969" cy="310" r="0.75"/><circle cx="999.7" cy="337.2" r="0.75"/><circle cx="1025" cy="143" r="0.75"/><circle cx="1025" cy="191.8" r="0.75"/><circle cx="932.5" cy="441.8" r="0.75"/><circle cx="985.5" cy="462" r="0.75"/><circle cx="1039.8" cy="376" r="0.75"/><circle cx="780.2" cy="174.3" r="0.75"/><circle cx="1063" cy="411.5" r="0.75"/></g></svg><rect x="458.2" y="172.5" width="348.00000000000006" height="174.5" fill="none" stroke="#d2d4d8" stroke-width="1"/><path d="M806.2,347 H852.5 M806.2,347 V391.7" stroke="#dcdcdc" stroke-width="1" fill="none"/><rect x="818.5" y="324.2" width="11" height="11" fill="#000" stroke="#d8cfc4" stroke-width="1"/><circle cx="824" cy="329.7" r="3" fill="#2a6be0"/><g fill="none" stroke-width="1"><rect x="111.800" y="530" width="8" height="8.500" stroke="#d4d4d4"/><path d="M115.500,530 L113.800,498.500 M110.400,498.800 L113.400,484.800 L117.200,498.800 Z" stroke="#3cb03c"/><path d="M120,534.3 L152,533 M152,529.8 L164.5,532.6 L152,536.4 Z" stroke="#b8382e"/></g><text x="109" y="478" font-size="10" fill="#c4c4c4" font-family="Liberation Sans, sans-serif">Y</text><text x="173.5" y="535.5" font-size="10" fill="#c4c4c4" font-family="Liberation Sans, sans-serif">X</text><rect x="95.5" y="123" width="20" height="10" fill="#343434" opacity="0.9"/><rect x="120" y="123" width="48.5" height="10" fill="#343434" opacity="0.9"/><text x="99" y="131" font-size="7.5" fill="#5e5e5e" font-family="Liberation Sans, sans-serif">Top</text><text x="123.5" y="131" font-size="7.5" fill="#5e5e5e" font-family="Liberation Sans, sans-serif">2D Wireframe</text></g></svg>
<div class="a" style="left:93.5px;top:553.7px;width:986.5px;height:12px;background:#f0f0f0"></div><svg class="a" style="left:93px;top:553px" width="180" height="13" viewBox="93 553 180 13"><g fill="#1a1a1a" stroke="none"><rect x="94" y="554.5" width="10.6" height="10.5" fill="#f7f7f7" stroke="#c9c9c9" stroke-width="0.6"/><rect x="105.2" y="554.5" width="10.6" height="10.5" fill="#f7f7f7" stroke="#c9c9c9" stroke-width="0.6"/><rect x="116.4" y="554.5" width="10.6" height="10.5" fill="#f7f7f7" stroke="#c9c9c9" stroke-width="0.6"/><rect x="127.6" y="554.5" width="10.6" height="10.5" fill="#f7f7f7" stroke="#c9c9c9" stroke-width="0.6"/><rect x="138.8" y="554.5" width="10.6" height="10.5" fill="#f7f7f7" stroke="#c9c9c9" stroke-width="0.6"/><path d="M97.3,556.5 h1.2 v6 h-1.2z M102,556.5 v6 l-3.3,-3z"/><path d="M112.3,556.5 v6 l-3.6,-3z"/><path d="M120.3,556.5 v6 l3.6,-3z"/><path d="M130.3,556.5 v6 l3.3,-3z M134,556.5 h1.2 v6 h-1.2z"/><path d="M143.5,556 h1.4 v2.9 h2.9 v1.4 h-2.9 v2.9 h-1.4 v-2.9 h-2.9 v-1.4 h2.9z"/></g><g fill="none" stroke="#333" stroke-width="0.8"><path d="M152,555 L157,565 M184.500,555 L190,565 M187.200,560 L184.500,565 M223.500,555 L229,565 M226.200,560 L223.500,565 M262.500,555 L258.500,565"/></g></svg><span class="t" style="left:161px;top:556px;font-size:7.6px;font-weight:bold;color:#111;letter-spacing:-0.2px">Model</span><span class="t" style="left:193.5px;top:556px;font-size:7.6px;color:#333;letter-spacing:-0.2px">Layout1</span><span class="t" style="left:232.5px;top:556px;font-size:7.6px;color:#333;letter-spacing:-0.2px">Layout2</span><div class="a" style="left:0;top:565.5px;width:1080px;height:4.5px;background:linear-gradient(#d0d0d0 0%,#5c5c5c 35%,#4a4a4a 55%,#bdbdbd 80%,#fff 100%)"></div><div class="a" style="left:0;top:570px;width:1080px;height:85px;background:#fff"></div><span class="t" style="left:0;top:593px;font-family:'Liberation Mono',monospace;font-size:8.35px;color:#333">CK_HANDLER)nil</span><span class="t" style="left:-2.6px;top:614px;font-family:'Liberation Mono',monospace;font-size:8.35px;color:#333">er:</span><div class="a" style="left:0;top:640.2px;width:1080px;height:1px;background:#b8b8b8"></div><span class="t" style="left:-2.6px;top:643.6px;font-family:'Liberation Mono',monospace;font-size:8.35px;color:#333">er:</span><div class="a" style="left:0;top:655px;width:1080px;height:20px;background:linear-gradient(#1e1e1e 0%,#2c2c2c 20%,#3a3a3a 100%)"></div><svg class="a" style="left:570px;top:655px" width="510" height="20" viewBox="570 655 510 20"><path d="M579.5,657 V673 M700.8,657 V673 M723,657 V673 M742,657 V673 M774,657 V673 M793.5,657 V673 M812,657 V673 M831.5,657 V673 M853.5,657 V673 M872,657 V673 M890.5,657 V673 M911,657 V673 M930.5,657 V673 M949,657 V673 M969.5,657 V673 M998.5,657 V673 M1026,657 V673 M1046,657 V673 M1067,657 V673" stroke="#555" stroke-width="0.7" fill="none"/><path d="M587.500,661.500 V671 M583,666.300 H592" stroke="#d82424" stroke-width="1.700" fill="none"/><path d="M590,661 l3,-3" stroke="#3a78d8" stroke-width="1.2"/><rect x="705" y="657.5" width="15" height="15" fill="#d6d6d2"/><path d="M707,671 L718,659" stroke="#3aa0a0" stroke-width="1.2"/><path d="M712,672 V664 M707,668 H712" stroke="#d05040" stroke-width="1"/><path d="M732,661.500 V670.500 M727,666 H737" stroke="#c03020" stroke-width="0.900" fill="none"/><path d="M752.500,660.500 V666.500 L747.500,670.500 M752.500,666.500 L757.500,670.500" stroke="#eee" stroke-width="1.700" fill="none"/><rect x="777" y="657.5" width="14.5" height="15" fill="#c9cdd6"/><path d="M784,660 V666 L779.5,671 M784,666 L789,671" stroke="#555" stroke-width="1.6" fill="none"/><rect x="786.5" y="662" width="3.5" height="5" fill="#e8d84a"/><path d="M801.500,660.500 V666.500 L797,670.500 M801.500,666.500 L806,670.500" stroke="#eee" stroke-width="1.700" fill="none"/><path d="M805,659 v4 M803,661 h4" stroke="#ddd" stroke-width="0.8"/><g fill="#e6e6e6"><circle cx="819" cy="661.5" r="0.9"/><circle cx="822.5" cy="661.5" r="0.9"/><circle cx="826" cy="661.5" r="0.9"/><circle cx="819" cy="665" r="0.9"/><circle cx="822.5" cy="665" r="0.9"/><circle cx="826" cy="665" r="0.9"/><circle cx="819" cy="668.5" r="0.9"/><circle cx="822.5" cy="668.5" r="0.9"/><circle cx="826" cy="668.5" r="0.9"/><circle cx="819" cy="672" r="0.9"/><circle cx="822.5" cy="672" r="0.9"/><circle cx="826" cy="672" r="0.9"/></g><rect x="835.5" y="657.5" width="14.5" height="15" fill="#b9b9b9"/><path d="M839,657.5 v15 M842.7,657.5 v15 M846.4,657.5 v15 M835.5,661.2 h14.5 M835.5,665 h14.5 M835.5,668.8 h14.5" stroke="#666" stroke-width="0.8"/><path d="M859.5,659.5 V668 M857.5,661.5 H862" stroke="#eee" stroke-width="1.2" fill="none"/><rect x="861" y="666" width="8" height="3" fill="#eee"/><path d="M876,668.5 H880 V665 M880,668.5 V671.5 H886" stroke="#b03020" stroke-width="1.2" fill="none"/><path d="M877,662 V668" stroke="#3a9a3a" stroke-width="1"/><circle cx="901.7" cy="665.3" r="5" fill="none" stroke="#ddd" stroke-width="1.3"/><circle cx="901.7" cy="665.3" r="3.6" fill="none" stroke="#b03030" stroke-width="1"/><rect x="916.5" y="661" width="10" height="10" fill="none" stroke="#ddd" stroke-width="1.3"/><circle cx="917.5" cy="660.5" r="2.2" fill="#c83020"/><path d="M945,660.5 L936,670.5 H946" stroke="#ddd" stroke-width="1.3" fill="none"/><path d="M954,660.5 H966 M954,664.5 H966 M954,668.5 H966" stroke="#eee" stroke-width="1.6"/><path d="M954,672 H966" stroke="#eee" stroke-width="0.8"/><circle cx="1036.8" cy="665.3" r="5" fill="none" stroke="#2a78e0" stroke-width="3.4" stroke-dasharray="2.6 1.3"/><circle cx="1036.8" cy="665.3" r="4.2" fill="none" stroke="#2a78e0" stroke-width="2.4"/><rect x="1050" y="658.5" width="6.5" height="6.5" fill="#f0f0f0"/><circle cx="1060" cy="663" r="3.6" fill="#f0f0f0"/><path d="M1049,672.5 L1055.5,666 L1062,672.5 Z" fill="#f0f0f0"/><circle cx="1075.500" cy="662" r="2" fill="none" stroke="#eee" stroke-width="1.200"/><path d="M1072.500,666 H1078.500 V669.500 H1072.500 Z M1073.500,672.500 L1075.500,670 L1077.500,672.500" stroke="#eee" stroke-width="1.100" fill="none"/></svg><span class="t" style="left:600px;top:661.3px;font-size:7.4px;color:#e8e8e8;letter-spacing:-0.12px">296312.609,6182765.434,0.000</span><span class="t" style="left:762.5px;top:661.3px;font-size:7.4px;color:#e8e8e8">1:1</span><span class="t" style="left:972.5px;top:661.3px;font-size:7.4px;color:#f0f0f0;letter-spacing:-0.2px">MODEL</span><span class="t" style="left:1001px;top:661.3px;font-size:7.4px;color:#6c6c6c;letter-spacing:-0.2px">TABLET</span>
</body></html>
